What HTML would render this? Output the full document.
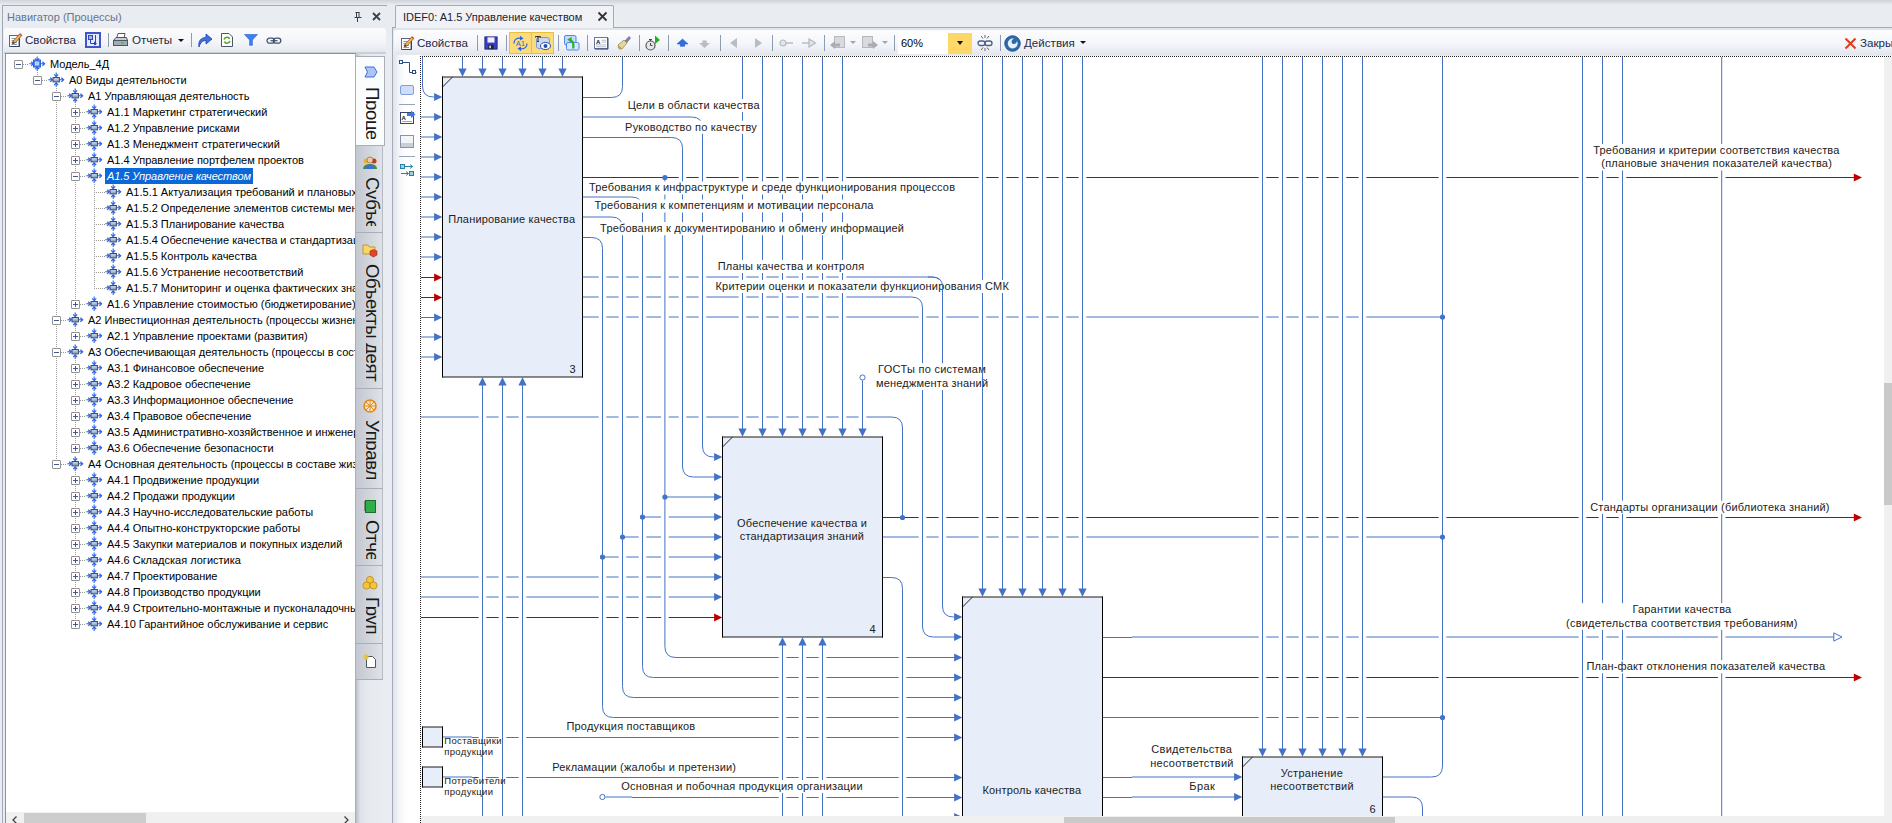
<!DOCTYPE html>
<html><head><meta charset="utf-8"><title>IDEF0</title><style>
html,body{margin:0;padding:0}
body{width:1892px;height:823px;overflow:hidden;position:relative;background:#e9ecf1;font-family:"Liberation Sans",sans-serif;font-size:11px;color:#000}
.a{position:absolute}
.tt{position:absolute;height:16px;line-height:16px;font-size:11px;white-space:nowrap}
.tb{position:absolute;font-size:11.6px;line-height:14px;white-space:nowrap;color:#1e2a4a}
.sep{position:absolute;width:1px;background:#8f9ab3}
svg text{font-family:"Liberation Sans",sans-serif}
</style></head>
<body>
<div class="a" style="left:0;top:0;width:1892px;height:5px;background:linear-gradient(#cfd3da,#e9ecf1)"></div>
<div class="a" style="left:2px;top:5px;width:386px;height:820px;border:1px solid #a3a9b4;border-bottom:none;box-sizing:border-box;background:#e9ecf1"></div>
<div class="a" style="left:7px;top:10px;font-size:11px;line-height:14px;color:#66748f;white-space:nowrap">Навигатор (Процессы)</div>
<svg class="a" style="left:352px;top:10px" width="34" height="14" viewBox="0 0 34 14"><g stroke="#3a3f4a" fill="none"><path d="M3.5 2.5H7.5M4.5 2.5V7.5M7 2.5V7.5M2.5 7.5H9.5M5.5 8V12" stroke-width="1"/><path d="M21 3L28 10M28 3L21 10" stroke-width="1.8"/></g></svg>
<div class="a" style="left:4px;top:28px;width:382px;height:24px;background:linear-gradient(#fcfcfd,#f3f5f8 60%,#e4e8ee);border-radius:3px"></div>
<div class="a" style="left:4px;top:52px;width:382px;height:2px;background:#c9ced7"></div>
<svg class="a" style="left:8px;top:32px" width="16" height="16" viewBox="0 0 16 16"><rect x="1.5" y="3.5" width="9.5" height="11" fill="#fdfdfd" stroke="#5b6784"/><path d="M11.5 5V14.5H2.5" stroke="#39435c" fill="none"/><path d="M3.5 6.5H7M3.5 8.5H6M3.5 10.5H9M3.5 12.5H9" stroke="#8d98b3"/><path d="M5 9.2L11.8 1.8L13.8 3.6L7 11L4.3 11.8Z" fill="#f0b24a" stroke="#7a4a20" stroke-width=".7"/><path d="M11.3 2.4L13.2 4.1L14.2 3L12.3 1.3Z" fill="#d0503a"/><path d="M4.3 11.8L5 9.2L7 11Z" fill="#3a3a3a"/></svg>
<div class="tb" style="left:25px;top:33px">Свойства</div>
<div class="a" style="left:85px;top:32px;width:12px;height:12px;border:2px solid #3f54c6;background:#e6ebfc"></div>
<svg class="a" style="left:86px;top:33px" width="14" height="14" viewBox="0 0 14 14"><rect x="2.5" y="2.5" width="4" height="4" fill="#9db4ee" stroke="#2a48b8"/><path d="M4.5 6.5V10.5H8M9.5 2V12" stroke="#2a48b8" fill="none"/><path d="M8 8.5L11 10.5L8 12.5Z" fill="#2a48b8"/></svg>
<div class="sep" style="left:108px;top:33px;height:14px"></div>
<svg class="a" style="left:112px;top:32px" width="17" height="16" viewBox="0 0 17 16"><path d="M4.5 6.5L6 1.5H13L12 6.5" fill="#fff" stroke="#555"/><path d="M1.5 8.5L4 5.5H14.5L15.5 8.5V13.5H1.5Z" fill="#c9ccd3" stroke="#4d5566"/><rect x="1.5" y="8.5" width="14" height="5" fill="#a4a9b4" stroke="#4d5566"/><rect x="9" y="10" width="3" height="2" fill="#3bd23b"/></svg>
<div class="tb" style="left:132px;top:33px">Отчеты</div>
<div class="a" style="left:178px;top:39px;border:3px solid transparent;border-top:3px solid #111;width:0;height:0"></div>
<div class="sep" style="left:191px;top:33px;height:14px"></div>
<svg class="a" style="left:197px;top:32px" width="16" height="16" viewBox="0 0 16 16"><path d="M2 15C1 9 4 5.5 9 5.5V2L15 7L9 12V8.5C5.5 8.5 3.5 10.5 2 15Z" fill="#3f6fe0" stroke="#1d3fa8" stroke-width=".8"/></svg>
<svg class="a" style="left:220px;top:32px" width="14" height="16" viewBox="0 0 14 16"><path d="M1.5 1.5H9L12.5 5V14.5H1.5Z" fill="#fff" stroke="#4d5566"/><path d="M4 7.5C5 4.5 9 4.5 9.5 7M10 9C9 12 5 12 4.5 9.5" stroke="#4ea524" stroke-width="1.6" fill="none"/></svg>
<svg class="a" style="left:244px;top:34px" width="14" height="12" viewBox="0 0 14 12"><path d="M0.5 0.5H13.5L8.4 6V11.3H5.6V6Z" fill="#3f7ff0" stroke="#2a5fd0" stroke-width=".6"/></svg>
<svg class="a" style="left:266px;top:37px" width="16" height="8" viewBox="0 0 16 8"><rect x="1" y="1.2" width="7.4" height="5" rx="2.5" fill="none" stroke="#46536f" stroke-width="1.3"/><rect x="7.4" y="1.2" width="7.4" height="5" rx="2.5" fill="none" stroke="#46536f" stroke-width="1.3"/><path d="M4.5 3.7H11.5" stroke="#46536f" stroke-width="1.2"/></svg>
<div class="a" style="left:5px;top:53px;width:351px;height:771px;background:#fff;border:1px solid #8a9099;border-right:1px solid #a9aeb7;box-sizing:border-box;overflow:hidden"></div>
<div class="a" style="left:6px;top:54px;width:349px;height:758px;overflow:hidden"><div class="a" style="left:-6px;top:-54px;width:400px;height:823px">
<div style="position:absolute;left:37px;top:72px;width:1px;height:8px;background:repeating-linear-gradient(to bottom,#9a9a9a 0 1px,transparent 1px 2px)"></div>
<div style="position:absolute;left:56px;top:88px;width:1px;height:376px;background:repeating-linear-gradient(to bottom,#9a9a9a 0 1px,transparent 1px 2px)"></div>
<div style="position:absolute;left:75px;top:104px;width:1px;height:200px;background:repeating-linear-gradient(to bottom,#9a9a9a 0 1px,transparent 1px 2px)"></div>
<div style="position:absolute;left:94px;top:184px;width:1px;height:104px;background:repeating-linear-gradient(to bottom,#9a9a9a 0 1px,transparent 1px 2px)"></div>
<div style="position:absolute;left:75px;top:328px;width:1px;height:8px;background:repeating-linear-gradient(to bottom,#9a9a9a 0 1px,transparent 1px 2px)"></div>
<div style="position:absolute;left:75px;top:360px;width:1px;height:88px;background:repeating-linear-gradient(to bottom,#9a9a9a 0 1px,transparent 1px 2px)"></div>
<div style="position:absolute;left:75px;top:472px;width:1px;height:152px;background:repeating-linear-gradient(to bottom,#9a9a9a 0 1px,transparent 1px 2px)"></div>
<div style="position:absolute;left:23px;top:64px;height:1px;width:6px;background:repeating-linear-gradient(to right,#9a9a9a 0 1px,transparent 1px 2px)"></div>
<div style="position:absolute;left:14px;top:60px;width:7px;height:7px;border:1px solid #919191;background:#fff;border-radius:1px"></div><div style="position:absolute;left:16px;top:64px;width:5px;height:1px;background:#44598f"></div>
<svg style="position:absolute;left:29px;top:56px" width="17" height="16" viewBox="0 0 17 16"><g stroke="#2b62e0" stroke-width="1.1" fill="none"><path d="M0.3 7.7H4M12 7.7H15.5M8.2 0.5V4.5M8.2 15V11"/><path d="M2.2 5.7L4.4 7.7L2.2 9.7M13.4 5.7L15.6 7.7L13.4 9.7M6.2 2.4L8.2 4.6L10.2 2.4M6.2 13.2L8.2 11L10.2 13.2" stroke-width="1.2"/></g><rect x="4.5" y="4" width="7" height="7" fill="#4f86ee" stroke="#2b62e0" stroke-width="1"/><rect x="6.5" y="6" width="3" height="3" fill="#a9c6fb" stroke="#dbe8ff" stroke-width=".7"/></svg>
<div class="tt" style="left:50px;top:56px">Модель_4Д</div>
<div style="position:absolute;left:42px;top:80px;height:1px;width:6px;background:repeating-linear-gradient(to right,#9a9a9a 0 1px,transparent 1px 2px)"></div>
<div style="position:absolute;left:33px;top:76px;width:7px;height:7px;border:1px solid #919191;background:#fff;border-radius:1px"></div><div style="position:absolute;left:35px;top:80px;width:5px;height:1px;background:#44598f"></div>
<svg style="position:absolute;left:48px;top:72px" width="17" height="16" viewBox="0 0 17 16"><g stroke="#2b62e0" stroke-width="1.1" fill="none"><path d="M0.3 7.7H4M12 7.7H15.5M8.2 0.5V4.5M8.2 15V11"/><path d="M2.2 5.7L4.4 7.7L2.2 9.7M13.4 5.7L15.6 7.7L13.4 9.7M6.2 2.4L8.2 4.6L10.2 2.4M6.2 13.2L8.2 11L10.2 13.2" stroke-width="1.2"/></g><rect x="5" y="5.5" width="6.4" height="4.4" fill="#9aabcb" stroke="#3b4c6e" stroke-width="1"/><rect x="5.8" y="6.2" width="4.8" height="1.4" fill="#c3cfe6"/></svg>
<div class="tt" style="left:69px;top:72px">A0 Виды деятельности</div>
<div style="position:absolute;left:61px;top:96px;height:1px;width:6px;background:repeating-linear-gradient(to right,#9a9a9a 0 1px,transparent 1px 2px)"></div>
<div style="position:absolute;left:52px;top:92px;width:7px;height:7px;border:1px solid #919191;background:#fff;border-radius:1px"></div><div style="position:absolute;left:54px;top:96px;width:5px;height:1px;background:#44598f"></div>
<svg style="position:absolute;left:67px;top:88px" width="17" height="16" viewBox="0 0 17 16"><g stroke="#2b62e0" stroke-width="1.1" fill="none"><path d="M0.3 7.7H4M12 7.7H15.5M8.2 0.5V4.5M8.2 15V11"/><path d="M2.2 5.7L4.4 7.7L2.2 9.7M13.4 5.7L15.6 7.7L13.4 9.7M6.2 2.4L8.2 4.6L10.2 2.4M6.2 13.2L8.2 11L10.2 13.2" stroke-width="1.2"/></g><rect x="5" y="5.5" width="6.4" height="4.4" fill="#9aabcb" stroke="#3b4c6e" stroke-width="1"/><rect x="5.8" y="6.2" width="4.8" height="1.4" fill="#c3cfe6"/></svg>
<div class="tt" style="left:88px;top:88px">A1 Управляющая деятельность</div>
<div style="position:absolute;left:80px;top:112px;height:1px;width:6px;background:repeating-linear-gradient(to right,#9a9a9a 0 1px,transparent 1px 2px)"></div>
<div style="position:absolute;left:71px;top:108px;width:7px;height:7px;border:1px solid #919191;background:#fff;border-radius:1px"></div><div style="position:absolute;left:73px;top:112px;width:5px;height:1px;background:#44598f"></div><div style="position:absolute;left:75px;top:110px;width:1px;height:5px;background:#44598f"></div>
<svg style="position:absolute;left:86px;top:104px" width="17" height="16" viewBox="0 0 17 16"><g stroke="#2b62e0" stroke-width="1.1" fill="none"><path d="M0.3 7.7H4M12 7.7H15.5M8.2 0.5V4.5M8.2 15V11"/><path d="M2.2 5.7L4.4 7.7L2.2 9.7M13.4 5.7L15.6 7.7L13.4 9.7M6.2 2.4L8.2 4.6L10.2 2.4M6.2 13.2L8.2 11L10.2 13.2" stroke-width="1.2"/></g><rect x="5" y="5.5" width="6.4" height="4.4" fill="#9aabcb" stroke="#3b4c6e" stroke-width="1"/><rect x="5.8" y="6.2" width="4.8" height="1.4" fill="#c3cfe6"/></svg>
<div class="tt" style="left:107px;top:104px">A1.1 Маркетинг стратегический</div>
<div style="position:absolute;left:80px;top:128px;height:1px;width:6px;background:repeating-linear-gradient(to right,#9a9a9a 0 1px,transparent 1px 2px)"></div>
<div style="position:absolute;left:71px;top:124px;width:7px;height:7px;border:1px solid #919191;background:#fff;border-radius:1px"></div><div style="position:absolute;left:73px;top:128px;width:5px;height:1px;background:#44598f"></div><div style="position:absolute;left:75px;top:126px;width:1px;height:5px;background:#44598f"></div>
<svg style="position:absolute;left:86px;top:120px" width="17" height="16" viewBox="0 0 17 16"><g stroke="#2b62e0" stroke-width="1.1" fill="none"><path d="M0.3 7.7H4M12 7.7H15.5M8.2 0.5V4.5M8.2 15V11"/><path d="M2.2 5.7L4.4 7.7L2.2 9.7M13.4 5.7L15.6 7.7L13.4 9.7M6.2 2.4L8.2 4.6L10.2 2.4M6.2 13.2L8.2 11L10.2 13.2" stroke-width="1.2"/></g><rect x="5" y="5.5" width="6.4" height="4.4" fill="#9aabcb" stroke="#3b4c6e" stroke-width="1"/><rect x="5.8" y="6.2" width="4.8" height="1.4" fill="#c3cfe6"/></svg>
<div class="tt" style="left:107px;top:120px">A1.2 Управление рисками</div>
<div style="position:absolute;left:80px;top:144px;height:1px;width:6px;background:repeating-linear-gradient(to right,#9a9a9a 0 1px,transparent 1px 2px)"></div>
<div style="position:absolute;left:71px;top:140px;width:7px;height:7px;border:1px solid #919191;background:#fff;border-radius:1px"></div><div style="position:absolute;left:73px;top:144px;width:5px;height:1px;background:#44598f"></div><div style="position:absolute;left:75px;top:142px;width:1px;height:5px;background:#44598f"></div>
<svg style="position:absolute;left:86px;top:136px" width="17" height="16" viewBox="0 0 17 16"><g stroke="#2b62e0" stroke-width="1.1" fill="none"><path d="M0.3 7.7H4M12 7.7H15.5M8.2 0.5V4.5M8.2 15V11"/><path d="M2.2 5.7L4.4 7.7L2.2 9.7M13.4 5.7L15.6 7.7L13.4 9.7M6.2 2.4L8.2 4.6L10.2 2.4M6.2 13.2L8.2 11L10.2 13.2" stroke-width="1.2"/></g><rect x="5" y="5.5" width="6.4" height="4.4" fill="#9aabcb" stroke="#3b4c6e" stroke-width="1"/><rect x="5.8" y="6.2" width="4.8" height="1.4" fill="#c3cfe6"/></svg>
<div class="tt" style="left:107px;top:136px">A1.3 Менеджмент стратегический</div>
<div style="position:absolute;left:80px;top:160px;height:1px;width:6px;background:repeating-linear-gradient(to right,#9a9a9a 0 1px,transparent 1px 2px)"></div>
<div style="position:absolute;left:71px;top:156px;width:7px;height:7px;border:1px solid #919191;background:#fff;border-radius:1px"></div><div style="position:absolute;left:73px;top:160px;width:5px;height:1px;background:#44598f"></div><div style="position:absolute;left:75px;top:158px;width:1px;height:5px;background:#44598f"></div>
<svg style="position:absolute;left:86px;top:152px" width="17" height="16" viewBox="0 0 17 16"><g stroke="#2b62e0" stroke-width="1.1" fill="none"><path d="M0.3 7.7H4M12 7.7H15.5M8.2 0.5V4.5M8.2 15V11"/><path d="M2.2 5.7L4.4 7.7L2.2 9.7M13.4 5.7L15.6 7.7L13.4 9.7M6.2 2.4L8.2 4.6L10.2 2.4M6.2 13.2L8.2 11L10.2 13.2" stroke-width="1.2"/></g><rect x="5" y="5.5" width="6.4" height="4.4" fill="#9aabcb" stroke="#3b4c6e" stroke-width="1"/><rect x="5.8" y="6.2" width="4.8" height="1.4" fill="#c3cfe6"/></svg>
<div class="tt" style="left:107px;top:152px">A1.4 Управление портфелем проектов</div>
<div style="position:absolute;left:80px;top:176px;height:1px;width:6px;background:repeating-linear-gradient(to right,#9a9a9a 0 1px,transparent 1px 2px)"></div>
<div style="position:absolute;left:71px;top:172px;width:7px;height:7px;border:1px solid #919191;background:#fff;border-radius:1px"></div><div style="position:absolute;left:73px;top:176px;width:5px;height:1px;background:#44598f"></div>
<svg style="position:absolute;left:86px;top:168px" width="17" height="16" viewBox="0 0 17 16"><g stroke="#2b62e0" stroke-width="1.1" fill="none"><path d="M0.3 7.7H4M12 7.7H15.5M8.2 0.5V4.5M8.2 15V11"/><path d="M2.2 5.7L4.4 7.7L2.2 9.7M13.4 5.7L15.6 7.7L13.4 9.7M6.2 2.4L8.2 4.6L10.2 2.4M6.2 13.2L8.2 11L10.2 13.2" stroke-width="1.2"/></g><rect x="5" y="5.5" width="6.4" height="4.4" fill="#9aabcb" stroke="#3b4c6e" stroke-width="1"/><rect x="5.8" y="6.2" width="4.8" height="1.4" fill="#c3cfe6"/></svg>
<div style="position:absolute;left:105px;top:168px;height:16px;width:148px;background:#0a68d8"></div>
<div class="tt" style="left:107px;top:168px;color:#fff;font-style:italic;letter-spacing:-0.08px">A1.5 Управление качеством</div>
<div style="position:absolute;left:94px;top:192px;height:1px;width:11px;background:repeating-linear-gradient(to right,#9a9a9a 0 1px,transparent 1px 2px)"></div>
<svg style="position:absolute;left:105px;top:184px" width="17" height="16" viewBox="0 0 17 16"><g stroke="#2b62e0" stroke-width="1.1" fill="none"><path d="M0.3 7.7H4M12 7.7H15.5M8.2 0.5V4.5M8.2 15V11"/><path d="M2.2 5.7L4.4 7.7L2.2 9.7M13.4 5.7L15.6 7.7L13.4 9.7M6.2 2.4L8.2 4.6L10.2 2.4M6.2 13.2L8.2 11L10.2 13.2" stroke-width="1.2"/></g><rect x="5" y="5.5" width="6.4" height="4.4" fill="#9aabcb" stroke="#3b4c6e" stroke-width="1"/><rect x="5.8" y="6.2" width="4.8" height="1.4" fill="#c3cfe6"/></svg>
<div class="tt" style="left:126px;top:184px">A1.5.1 Актуализация требований и плановых значений</div>
<div style="position:absolute;left:94px;top:208px;height:1px;width:11px;background:repeating-linear-gradient(to right,#9a9a9a 0 1px,transparent 1px 2px)"></div>
<svg style="position:absolute;left:105px;top:200px" width="17" height="16" viewBox="0 0 17 16"><g stroke="#2b62e0" stroke-width="1.1" fill="none"><path d="M0.3 7.7H4M12 7.7H15.5M8.2 0.5V4.5M8.2 15V11"/><path d="M2.2 5.7L4.4 7.7L2.2 9.7M13.4 5.7L15.6 7.7L13.4 9.7M6.2 2.4L8.2 4.6L10.2 2.4M6.2 13.2L8.2 11L10.2 13.2" stroke-width="1.2"/></g><rect x="5" y="5.5" width="6.4" height="4.4" fill="#9aabcb" stroke="#3b4c6e" stroke-width="1"/><rect x="5.8" y="6.2" width="4.8" height="1.4" fill="#c3cfe6"/></svg>
<div class="tt" style="left:126px;top:200px">A1.5.2 Определение элементов системы менеджмента</div>
<div style="position:absolute;left:94px;top:224px;height:1px;width:11px;background:repeating-linear-gradient(to right,#9a9a9a 0 1px,transparent 1px 2px)"></div>
<svg style="position:absolute;left:105px;top:216px" width="17" height="16" viewBox="0 0 17 16"><g stroke="#2b62e0" stroke-width="1.1" fill="none"><path d="M0.3 7.7H4M12 7.7H15.5M8.2 0.5V4.5M8.2 15V11"/><path d="M2.2 5.7L4.4 7.7L2.2 9.7M13.4 5.7L15.6 7.7L13.4 9.7M6.2 2.4L8.2 4.6L10.2 2.4M6.2 13.2L8.2 11L10.2 13.2" stroke-width="1.2"/></g><rect x="5" y="5.5" width="6.4" height="4.4" fill="#9aabcb" stroke="#3b4c6e" stroke-width="1"/><rect x="5.8" y="6.2" width="4.8" height="1.4" fill="#c3cfe6"/></svg>
<div class="tt" style="left:126px;top:216px">A1.5.3 Планирование качества</div>
<div style="position:absolute;left:94px;top:240px;height:1px;width:11px;background:repeating-linear-gradient(to right,#9a9a9a 0 1px,transparent 1px 2px)"></div>
<svg style="position:absolute;left:105px;top:232px" width="17" height="16" viewBox="0 0 17 16"><g stroke="#2b62e0" stroke-width="1.1" fill="none"><path d="M0.3 7.7H4M12 7.7H15.5M8.2 0.5V4.5M8.2 15V11"/><path d="M2.2 5.7L4.4 7.7L2.2 9.7M13.4 5.7L15.6 7.7L13.4 9.7M6.2 2.4L8.2 4.6L10.2 2.4M6.2 13.2L8.2 11L10.2 13.2" stroke-width="1.2"/></g><rect x="5" y="5.5" width="6.4" height="4.4" fill="#9aabcb" stroke="#3b4c6e" stroke-width="1"/><rect x="5.8" y="6.2" width="4.8" height="1.4" fill="#c3cfe6"/></svg>
<div class="tt" style="left:126px;top:232px">A1.5.4 Обеспечение качества и стандартизация знаний</div>
<div style="position:absolute;left:94px;top:256px;height:1px;width:11px;background:repeating-linear-gradient(to right,#9a9a9a 0 1px,transparent 1px 2px)"></div>
<svg style="position:absolute;left:105px;top:248px" width="17" height="16" viewBox="0 0 17 16"><g stroke="#2b62e0" stroke-width="1.1" fill="none"><path d="M0.3 7.7H4M12 7.7H15.5M8.2 0.5V4.5M8.2 15V11"/><path d="M2.2 5.7L4.4 7.7L2.2 9.7M13.4 5.7L15.6 7.7L13.4 9.7M6.2 2.4L8.2 4.6L10.2 2.4M6.2 13.2L8.2 11L10.2 13.2" stroke-width="1.2"/></g><rect x="5" y="5.5" width="6.4" height="4.4" fill="#9aabcb" stroke="#3b4c6e" stroke-width="1"/><rect x="5.8" y="6.2" width="4.8" height="1.4" fill="#c3cfe6"/></svg>
<div class="tt" style="left:126px;top:248px">A1.5.5 Контроль качества</div>
<div style="position:absolute;left:94px;top:272px;height:1px;width:11px;background:repeating-linear-gradient(to right,#9a9a9a 0 1px,transparent 1px 2px)"></div>
<svg style="position:absolute;left:105px;top:264px" width="17" height="16" viewBox="0 0 17 16"><g stroke="#2b62e0" stroke-width="1.1" fill="none"><path d="M0.3 7.7H4M12 7.7H15.5M8.2 0.5V4.5M8.2 15V11"/><path d="M2.2 5.7L4.4 7.7L2.2 9.7M13.4 5.7L15.6 7.7L13.4 9.7M6.2 2.4L8.2 4.6L10.2 2.4M6.2 13.2L8.2 11L10.2 13.2" stroke-width="1.2"/></g><rect x="5" y="5.5" width="6.4" height="4.4" fill="#9aabcb" stroke="#3b4c6e" stroke-width="1"/><rect x="5.8" y="6.2" width="4.8" height="1.4" fill="#c3cfe6"/></svg>
<div class="tt" style="left:126px;top:264px">A1.5.6 Устранение несоответствий</div>
<div style="position:absolute;left:94px;top:288px;height:1px;width:11px;background:repeating-linear-gradient(to right,#9a9a9a 0 1px,transparent 1px 2px)"></div>
<svg style="position:absolute;left:105px;top:280px" width="17" height="16" viewBox="0 0 17 16"><g stroke="#2b62e0" stroke-width="1.1" fill="none"><path d="M0.3 7.7H4M12 7.7H15.5M8.2 0.5V4.5M8.2 15V11"/><path d="M2.2 5.7L4.4 7.7L2.2 9.7M13.4 5.7L15.6 7.7L13.4 9.7M6.2 2.4L8.2 4.6L10.2 2.4M6.2 13.2L8.2 11L10.2 13.2" stroke-width="1.2"/></g><rect x="5" y="5.5" width="6.4" height="4.4" fill="#9aabcb" stroke="#3b4c6e" stroke-width="1"/><rect x="5.8" y="6.2" width="4.8" height="1.4" fill="#c3cfe6"/></svg>
<div class="tt" style="left:126px;top:280px">A1.5.7 Мониторинг и оценка фактических значений</div>
<div style="position:absolute;left:80px;top:304px;height:1px;width:6px;background:repeating-linear-gradient(to right,#9a9a9a 0 1px,transparent 1px 2px)"></div>
<div style="position:absolute;left:71px;top:300px;width:7px;height:7px;border:1px solid #919191;background:#fff;border-radius:1px"></div><div style="position:absolute;left:73px;top:304px;width:5px;height:1px;background:#44598f"></div><div style="position:absolute;left:75px;top:302px;width:1px;height:5px;background:#44598f"></div>
<svg style="position:absolute;left:86px;top:296px" width="17" height="16" viewBox="0 0 17 16"><g stroke="#2b62e0" stroke-width="1.1" fill="none"><path d="M0.3 7.7H4M12 7.7H15.5M8.2 0.5V4.5M8.2 15V11"/><path d="M2.2 5.7L4.4 7.7L2.2 9.7M13.4 5.7L15.6 7.7L13.4 9.7M6.2 2.4L8.2 4.6L10.2 2.4M6.2 13.2L8.2 11L10.2 13.2" stroke-width="1.2"/></g><rect x="5" y="5.5" width="6.4" height="4.4" fill="#9aabcb" stroke="#3b4c6e" stroke-width="1"/><rect x="5.8" y="6.2" width="4.8" height="1.4" fill="#c3cfe6"/></svg>
<div class="tt" style="left:107px;top:296px">A1.6 Управление стоимостью (бюджетирование)</div>
<div style="position:absolute;left:61px;top:320px;height:1px;width:6px;background:repeating-linear-gradient(to right,#9a9a9a 0 1px,transparent 1px 2px)"></div>
<div style="position:absolute;left:52px;top:316px;width:7px;height:7px;border:1px solid #919191;background:#fff;border-radius:1px"></div><div style="position:absolute;left:54px;top:320px;width:5px;height:1px;background:#44598f"></div>
<svg style="position:absolute;left:67px;top:312px" width="17" height="16" viewBox="0 0 17 16"><g stroke="#2b62e0" stroke-width="1.1" fill="none"><path d="M0.3 7.7H4M12 7.7H15.5M8.2 0.5V4.5M8.2 15V11"/><path d="M2.2 5.7L4.4 7.7L2.2 9.7M13.4 5.7L15.6 7.7L13.4 9.7M6.2 2.4L8.2 4.6L10.2 2.4M6.2 13.2L8.2 11L10.2 13.2" stroke-width="1.2"/></g><rect x="5" y="5.5" width="6.4" height="4.4" fill="#9aabcb" stroke="#3b4c6e" stroke-width="1"/><rect x="5.8" y="6.2" width="4.8" height="1.4" fill="#c3cfe6"/></svg>
<div class="tt" style="left:88px;top:312px">A2 Инвестиционная деятельность (процессы жизненного цикла)</div>
<div style="position:absolute;left:80px;top:336px;height:1px;width:6px;background:repeating-linear-gradient(to right,#9a9a9a 0 1px,transparent 1px 2px)"></div>
<div style="position:absolute;left:71px;top:332px;width:7px;height:7px;border:1px solid #919191;background:#fff;border-radius:1px"></div><div style="position:absolute;left:73px;top:336px;width:5px;height:1px;background:#44598f"></div><div style="position:absolute;left:75px;top:334px;width:1px;height:5px;background:#44598f"></div>
<svg style="position:absolute;left:86px;top:328px" width="17" height="16" viewBox="0 0 17 16"><g stroke="#2b62e0" stroke-width="1.1" fill="none"><path d="M0.3 7.7H4M12 7.7H15.5M8.2 0.5V4.5M8.2 15V11"/><path d="M2.2 5.7L4.4 7.7L2.2 9.7M13.4 5.7L15.6 7.7L13.4 9.7M6.2 2.4L8.2 4.6L10.2 2.4M6.2 13.2L8.2 11L10.2 13.2" stroke-width="1.2"/></g><rect x="5" y="5.5" width="6.4" height="4.4" fill="#9aabcb" stroke="#3b4c6e" stroke-width="1"/><rect x="5.8" y="6.2" width="4.8" height="1.4" fill="#c3cfe6"/></svg>
<div class="tt" style="left:107px;top:328px">A2.1 Управление проектами (развития)</div>
<div style="position:absolute;left:61px;top:352px;height:1px;width:6px;background:repeating-linear-gradient(to right,#9a9a9a 0 1px,transparent 1px 2px)"></div>
<div style="position:absolute;left:52px;top:348px;width:7px;height:7px;border:1px solid #919191;background:#fff;border-radius:1px"></div><div style="position:absolute;left:54px;top:352px;width:5px;height:1px;background:#44598f"></div>
<svg style="position:absolute;left:67px;top:344px" width="17" height="16" viewBox="0 0 17 16"><g stroke="#2b62e0" stroke-width="1.1" fill="none"><path d="M0.3 7.7H4M12 7.7H15.5M8.2 0.5V4.5M8.2 15V11"/><path d="M2.2 5.7L4.4 7.7L2.2 9.7M13.4 5.7L15.6 7.7L13.4 9.7M6.2 2.4L8.2 4.6L10.2 2.4M6.2 13.2L8.2 11L10.2 13.2" stroke-width="1.2"/></g><rect x="5" y="5.5" width="6.4" height="4.4" fill="#9aabcb" stroke="#3b4c6e" stroke-width="1"/><rect x="5.8" y="6.2" width="4.8" height="1.4" fill="#c3cfe6"/></svg>
<div class="tt" style="left:88px;top:344px">A3 Обеспечивающая деятельность (процессы в составе</div>
<div style="position:absolute;left:80px;top:368px;height:1px;width:6px;background:repeating-linear-gradient(to right,#9a9a9a 0 1px,transparent 1px 2px)"></div>
<div style="position:absolute;left:71px;top:364px;width:7px;height:7px;border:1px solid #919191;background:#fff;border-radius:1px"></div><div style="position:absolute;left:73px;top:368px;width:5px;height:1px;background:#44598f"></div><div style="position:absolute;left:75px;top:366px;width:1px;height:5px;background:#44598f"></div>
<svg style="position:absolute;left:86px;top:360px" width="17" height="16" viewBox="0 0 17 16"><g stroke="#2b62e0" stroke-width="1.1" fill="none"><path d="M0.3 7.7H4M12 7.7H15.5M8.2 0.5V4.5M8.2 15V11"/><path d="M2.2 5.7L4.4 7.7L2.2 9.7M13.4 5.7L15.6 7.7L13.4 9.7M6.2 2.4L8.2 4.6L10.2 2.4M6.2 13.2L8.2 11L10.2 13.2" stroke-width="1.2"/></g><rect x="5" y="5.5" width="6.4" height="4.4" fill="#9aabcb" stroke="#3b4c6e" stroke-width="1"/><rect x="5.8" y="6.2" width="4.8" height="1.4" fill="#c3cfe6"/></svg>
<div class="tt" style="left:107px;top:360px">A3.1 Финансовое обеспечение</div>
<div style="position:absolute;left:80px;top:384px;height:1px;width:6px;background:repeating-linear-gradient(to right,#9a9a9a 0 1px,transparent 1px 2px)"></div>
<div style="position:absolute;left:71px;top:380px;width:7px;height:7px;border:1px solid #919191;background:#fff;border-radius:1px"></div><div style="position:absolute;left:73px;top:384px;width:5px;height:1px;background:#44598f"></div><div style="position:absolute;left:75px;top:382px;width:1px;height:5px;background:#44598f"></div>
<svg style="position:absolute;left:86px;top:376px" width="17" height="16" viewBox="0 0 17 16"><g stroke="#2b62e0" stroke-width="1.1" fill="none"><path d="M0.3 7.7H4M12 7.7H15.5M8.2 0.5V4.5M8.2 15V11"/><path d="M2.2 5.7L4.4 7.7L2.2 9.7M13.4 5.7L15.6 7.7L13.4 9.7M6.2 2.4L8.2 4.6L10.2 2.4M6.2 13.2L8.2 11L10.2 13.2" stroke-width="1.2"/></g><rect x="5" y="5.5" width="6.4" height="4.4" fill="#9aabcb" stroke="#3b4c6e" stroke-width="1"/><rect x="5.8" y="6.2" width="4.8" height="1.4" fill="#c3cfe6"/></svg>
<div class="tt" style="left:107px;top:376px">A3.2 Кадровое обеспечение</div>
<div style="position:absolute;left:80px;top:400px;height:1px;width:6px;background:repeating-linear-gradient(to right,#9a9a9a 0 1px,transparent 1px 2px)"></div>
<div style="position:absolute;left:71px;top:396px;width:7px;height:7px;border:1px solid #919191;background:#fff;border-radius:1px"></div><div style="position:absolute;left:73px;top:400px;width:5px;height:1px;background:#44598f"></div><div style="position:absolute;left:75px;top:398px;width:1px;height:5px;background:#44598f"></div>
<svg style="position:absolute;left:86px;top:392px" width="17" height="16" viewBox="0 0 17 16"><g stroke="#2b62e0" stroke-width="1.1" fill="none"><path d="M0.3 7.7H4M12 7.7H15.5M8.2 0.5V4.5M8.2 15V11"/><path d="M2.2 5.7L4.4 7.7L2.2 9.7M13.4 5.7L15.6 7.7L13.4 9.7M6.2 2.4L8.2 4.6L10.2 2.4M6.2 13.2L8.2 11L10.2 13.2" stroke-width="1.2"/></g><rect x="5" y="5.5" width="6.4" height="4.4" fill="#9aabcb" stroke="#3b4c6e" stroke-width="1"/><rect x="5.8" y="6.2" width="4.8" height="1.4" fill="#c3cfe6"/></svg>
<div class="tt" style="left:107px;top:392px">A3.3 Информационное обеспечение</div>
<div style="position:absolute;left:80px;top:416px;height:1px;width:6px;background:repeating-linear-gradient(to right,#9a9a9a 0 1px,transparent 1px 2px)"></div>
<div style="position:absolute;left:71px;top:412px;width:7px;height:7px;border:1px solid #919191;background:#fff;border-radius:1px"></div><div style="position:absolute;left:73px;top:416px;width:5px;height:1px;background:#44598f"></div><div style="position:absolute;left:75px;top:414px;width:1px;height:5px;background:#44598f"></div>
<svg style="position:absolute;left:86px;top:408px" width="17" height="16" viewBox="0 0 17 16"><g stroke="#2b62e0" stroke-width="1.1" fill="none"><path d="M0.3 7.7H4M12 7.7H15.5M8.2 0.5V4.5M8.2 15V11"/><path d="M2.2 5.7L4.4 7.7L2.2 9.7M13.4 5.7L15.6 7.7L13.4 9.7M6.2 2.4L8.2 4.6L10.2 2.4M6.2 13.2L8.2 11L10.2 13.2" stroke-width="1.2"/></g><rect x="5" y="5.5" width="6.4" height="4.4" fill="#9aabcb" stroke="#3b4c6e" stroke-width="1"/><rect x="5.8" y="6.2" width="4.8" height="1.4" fill="#c3cfe6"/></svg>
<div class="tt" style="left:107px;top:408px">A3.4 Правовое обеспечение</div>
<div style="position:absolute;left:80px;top:432px;height:1px;width:6px;background:repeating-linear-gradient(to right,#9a9a9a 0 1px,transparent 1px 2px)"></div>
<div style="position:absolute;left:71px;top:428px;width:7px;height:7px;border:1px solid #919191;background:#fff;border-radius:1px"></div><div style="position:absolute;left:73px;top:432px;width:5px;height:1px;background:#44598f"></div><div style="position:absolute;left:75px;top:430px;width:1px;height:5px;background:#44598f"></div>
<svg style="position:absolute;left:86px;top:424px" width="17" height="16" viewBox="0 0 17 16"><g stroke="#2b62e0" stroke-width="1.1" fill="none"><path d="M0.3 7.7H4M12 7.7H15.5M8.2 0.5V4.5M8.2 15V11"/><path d="M2.2 5.7L4.4 7.7L2.2 9.7M13.4 5.7L15.6 7.7L13.4 9.7M6.2 2.4L8.2 4.6L10.2 2.4M6.2 13.2L8.2 11L10.2 13.2" stroke-width="1.2"/></g><rect x="5" y="5.5" width="6.4" height="4.4" fill="#9aabcb" stroke="#3b4c6e" stroke-width="1"/><rect x="5.8" y="6.2" width="4.8" height="1.4" fill="#c3cfe6"/></svg>
<div class="tt" style="left:107px;top:424px">A3.5 Административно-хозяйственное и инженерное</div>
<div style="position:absolute;left:80px;top:448px;height:1px;width:6px;background:repeating-linear-gradient(to right,#9a9a9a 0 1px,transparent 1px 2px)"></div>
<div style="position:absolute;left:71px;top:444px;width:7px;height:7px;border:1px solid #919191;background:#fff;border-radius:1px"></div><div style="position:absolute;left:73px;top:448px;width:5px;height:1px;background:#44598f"></div><div style="position:absolute;left:75px;top:446px;width:1px;height:5px;background:#44598f"></div>
<svg style="position:absolute;left:86px;top:440px" width="17" height="16" viewBox="0 0 17 16"><g stroke="#2b62e0" stroke-width="1.1" fill="none"><path d="M0.3 7.7H4M12 7.7H15.5M8.2 0.5V4.5M8.2 15V11"/><path d="M2.2 5.7L4.4 7.7L2.2 9.7M13.4 5.7L15.6 7.7L13.4 9.7M6.2 2.4L8.2 4.6L10.2 2.4M6.2 13.2L8.2 11L10.2 13.2" stroke-width="1.2"/></g><rect x="5" y="5.5" width="6.4" height="4.4" fill="#9aabcb" stroke="#3b4c6e" stroke-width="1"/><rect x="5.8" y="6.2" width="4.8" height="1.4" fill="#c3cfe6"/></svg>
<div class="tt" style="left:107px;top:440px">A3.6 Обеспечение безопасности</div>
<div style="position:absolute;left:61px;top:464px;height:1px;width:6px;background:repeating-linear-gradient(to right,#9a9a9a 0 1px,transparent 1px 2px)"></div>
<div style="position:absolute;left:52px;top:460px;width:7px;height:7px;border:1px solid #919191;background:#fff;border-radius:1px"></div><div style="position:absolute;left:54px;top:464px;width:5px;height:1px;background:#44598f"></div>
<svg style="position:absolute;left:67px;top:456px" width="17" height="16" viewBox="0 0 17 16"><g stroke="#2b62e0" stroke-width="1.1" fill="none"><path d="M0.3 7.7H4M12 7.7H15.5M8.2 0.5V4.5M8.2 15V11"/><path d="M2.2 5.7L4.4 7.7L2.2 9.7M13.4 5.7L15.6 7.7L13.4 9.7M6.2 2.4L8.2 4.6L10.2 2.4M6.2 13.2L8.2 11L10.2 13.2" stroke-width="1.2"/></g><rect x="5" y="5.5" width="6.4" height="4.4" fill="#9aabcb" stroke="#3b4c6e" stroke-width="1"/><rect x="5.8" y="6.2" width="4.8" height="1.4" fill="#c3cfe6"/></svg>
<div class="tt" style="left:88px;top:456px">A4 Основная деятельность (процессы в составе жизненного</div>
<div style="position:absolute;left:80px;top:480px;height:1px;width:6px;background:repeating-linear-gradient(to right,#9a9a9a 0 1px,transparent 1px 2px)"></div>
<div style="position:absolute;left:71px;top:476px;width:7px;height:7px;border:1px solid #919191;background:#fff;border-radius:1px"></div><div style="position:absolute;left:73px;top:480px;width:5px;height:1px;background:#44598f"></div><div style="position:absolute;left:75px;top:478px;width:1px;height:5px;background:#44598f"></div>
<svg style="position:absolute;left:86px;top:472px" width="17" height="16" viewBox="0 0 17 16"><g stroke="#2b62e0" stroke-width="1.1" fill="none"><path d="M0.3 7.7H4M12 7.7H15.5M8.2 0.5V4.5M8.2 15V11"/><path d="M2.2 5.7L4.4 7.7L2.2 9.7M13.4 5.7L15.6 7.7L13.4 9.7M6.2 2.4L8.2 4.6L10.2 2.4M6.2 13.2L8.2 11L10.2 13.2" stroke-width="1.2"/></g><rect x="5" y="5.5" width="6.4" height="4.4" fill="#9aabcb" stroke="#3b4c6e" stroke-width="1"/><rect x="5.8" y="6.2" width="4.8" height="1.4" fill="#c3cfe6"/></svg>
<div class="tt" style="left:107px;top:472px">A4.1 Продвижение продукции</div>
<div style="position:absolute;left:80px;top:496px;height:1px;width:6px;background:repeating-linear-gradient(to right,#9a9a9a 0 1px,transparent 1px 2px)"></div>
<div style="position:absolute;left:71px;top:492px;width:7px;height:7px;border:1px solid #919191;background:#fff;border-radius:1px"></div><div style="position:absolute;left:73px;top:496px;width:5px;height:1px;background:#44598f"></div><div style="position:absolute;left:75px;top:494px;width:1px;height:5px;background:#44598f"></div>
<svg style="position:absolute;left:86px;top:488px" width="17" height="16" viewBox="0 0 17 16"><g stroke="#2b62e0" stroke-width="1.1" fill="none"><path d="M0.3 7.7H4M12 7.7H15.5M8.2 0.5V4.5M8.2 15V11"/><path d="M2.2 5.7L4.4 7.7L2.2 9.7M13.4 5.7L15.6 7.7L13.4 9.7M6.2 2.4L8.2 4.6L10.2 2.4M6.2 13.2L8.2 11L10.2 13.2" stroke-width="1.2"/></g><rect x="5" y="5.5" width="6.4" height="4.4" fill="#9aabcb" stroke="#3b4c6e" stroke-width="1"/><rect x="5.8" y="6.2" width="4.8" height="1.4" fill="#c3cfe6"/></svg>
<div class="tt" style="left:107px;top:488px">A4.2 Продажи продукции</div>
<div style="position:absolute;left:80px;top:512px;height:1px;width:6px;background:repeating-linear-gradient(to right,#9a9a9a 0 1px,transparent 1px 2px)"></div>
<div style="position:absolute;left:71px;top:508px;width:7px;height:7px;border:1px solid #919191;background:#fff;border-radius:1px"></div><div style="position:absolute;left:73px;top:512px;width:5px;height:1px;background:#44598f"></div><div style="position:absolute;left:75px;top:510px;width:1px;height:5px;background:#44598f"></div>
<svg style="position:absolute;left:86px;top:504px" width="17" height="16" viewBox="0 0 17 16"><g stroke="#2b62e0" stroke-width="1.1" fill="none"><path d="M0.3 7.7H4M12 7.7H15.5M8.2 0.5V4.5M8.2 15V11"/><path d="M2.2 5.7L4.4 7.7L2.2 9.7M13.4 5.7L15.6 7.7L13.4 9.7M6.2 2.4L8.2 4.6L10.2 2.4M6.2 13.2L8.2 11L10.2 13.2" stroke-width="1.2"/></g><rect x="5" y="5.5" width="6.4" height="4.4" fill="#9aabcb" stroke="#3b4c6e" stroke-width="1"/><rect x="5.8" y="6.2" width="4.8" height="1.4" fill="#c3cfe6"/></svg>
<div class="tt" style="left:107px;top:504px">A4.3 Научно-исследовательские работы</div>
<div style="position:absolute;left:80px;top:528px;height:1px;width:6px;background:repeating-linear-gradient(to right,#9a9a9a 0 1px,transparent 1px 2px)"></div>
<div style="position:absolute;left:71px;top:524px;width:7px;height:7px;border:1px solid #919191;background:#fff;border-radius:1px"></div><div style="position:absolute;left:73px;top:528px;width:5px;height:1px;background:#44598f"></div><div style="position:absolute;left:75px;top:526px;width:1px;height:5px;background:#44598f"></div>
<svg style="position:absolute;left:86px;top:520px" width="17" height="16" viewBox="0 0 17 16"><g stroke="#2b62e0" stroke-width="1.1" fill="none"><path d="M0.3 7.7H4M12 7.7H15.5M8.2 0.5V4.5M8.2 15V11"/><path d="M2.2 5.7L4.4 7.7L2.2 9.7M13.4 5.7L15.6 7.7L13.4 9.7M6.2 2.4L8.2 4.6L10.2 2.4M6.2 13.2L8.2 11L10.2 13.2" stroke-width="1.2"/></g><rect x="5" y="5.5" width="6.4" height="4.4" fill="#9aabcb" stroke="#3b4c6e" stroke-width="1"/><rect x="5.8" y="6.2" width="4.8" height="1.4" fill="#c3cfe6"/></svg>
<div class="tt" style="left:107px;top:520px">A4.4 Опытно-конструкторские работы</div>
<div style="position:absolute;left:80px;top:544px;height:1px;width:6px;background:repeating-linear-gradient(to right,#9a9a9a 0 1px,transparent 1px 2px)"></div>
<div style="position:absolute;left:71px;top:540px;width:7px;height:7px;border:1px solid #919191;background:#fff;border-radius:1px"></div><div style="position:absolute;left:73px;top:544px;width:5px;height:1px;background:#44598f"></div><div style="position:absolute;left:75px;top:542px;width:1px;height:5px;background:#44598f"></div>
<svg style="position:absolute;left:86px;top:536px" width="17" height="16" viewBox="0 0 17 16"><g stroke="#2b62e0" stroke-width="1.1" fill="none"><path d="M0.3 7.7H4M12 7.7H15.5M8.2 0.5V4.5M8.2 15V11"/><path d="M2.2 5.7L4.4 7.7L2.2 9.7M13.4 5.7L15.6 7.7L13.4 9.7M6.2 2.4L8.2 4.6L10.2 2.4M6.2 13.2L8.2 11L10.2 13.2" stroke-width="1.2"/></g><rect x="5" y="5.5" width="6.4" height="4.4" fill="#9aabcb" stroke="#3b4c6e" stroke-width="1"/><rect x="5.8" y="6.2" width="4.8" height="1.4" fill="#c3cfe6"/></svg>
<div class="tt" style="left:107px;top:536px">A4.5 Закупки материалов и покупных изделий</div>
<div style="position:absolute;left:80px;top:560px;height:1px;width:6px;background:repeating-linear-gradient(to right,#9a9a9a 0 1px,transparent 1px 2px)"></div>
<div style="position:absolute;left:71px;top:556px;width:7px;height:7px;border:1px solid #919191;background:#fff;border-radius:1px"></div><div style="position:absolute;left:73px;top:560px;width:5px;height:1px;background:#44598f"></div><div style="position:absolute;left:75px;top:558px;width:1px;height:5px;background:#44598f"></div>
<svg style="position:absolute;left:86px;top:552px" width="17" height="16" viewBox="0 0 17 16"><g stroke="#2b62e0" stroke-width="1.1" fill="none"><path d="M0.3 7.7H4M12 7.7H15.5M8.2 0.5V4.5M8.2 15V11"/><path d="M2.2 5.7L4.4 7.7L2.2 9.7M13.4 5.7L15.6 7.7L13.4 9.7M6.2 2.4L8.2 4.6L10.2 2.4M6.2 13.2L8.2 11L10.2 13.2" stroke-width="1.2"/></g><rect x="5" y="5.5" width="6.4" height="4.4" fill="#9aabcb" stroke="#3b4c6e" stroke-width="1"/><rect x="5.8" y="6.2" width="4.8" height="1.4" fill="#c3cfe6"/></svg>
<div class="tt" style="left:107px;top:552px">A4.6 Складская логистика</div>
<div style="position:absolute;left:80px;top:576px;height:1px;width:6px;background:repeating-linear-gradient(to right,#9a9a9a 0 1px,transparent 1px 2px)"></div>
<div style="position:absolute;left:71px;top:572px;width:7px;height:7px;border:1px solid #919191;background:#fff;border-radius:1px"></div><div style="position:absolute;left:73px;top:576px;width:5px;height:1px;background:#44598f"></div><div style="position:absolute;left:75px;top:574px;width:1px;height:5px;background:#44598f"></div>
<svg style="position:absolute;left:86px;top:568px" width="17" height="16" viewBox="0 0 17 16"><g stroke="#2b62e0" stroke-width="1.1" fill="none"><path d="M0.3 7.7H4M12 7.7H15.5M8.2 0.5V4.5M8.2 15V11"/><path d="M2.2 5.7L4.4 7.7L2.2 9.7M13.4 5.7L15.6 7.7L13.4 9.7M6.2 2.4L8.2 4.6L10.2 2.4M6.2 13.2L8.2 11L10.2 13.2" stroke-width="1.2"/></g><rect x="5" y="5.5" width="6.4" height="4.4" fill="#9aabcb" stroke="#3b4c6e" stroke-width="1"/><rect x="5.8" y="6.2" width="4.8" height="1.4" fill="#c3cfe6"/></svg>
<div class="tt" style="left:107px;top:568px">A4.7 Проектирование</div>
<div style="position:absolute;left:80px;top:592px;height:1px;width:6px;background:repeating-linear-gradient(to right,#9a9a9a 0 1px,transparent 1px 2px)"></div>
<div style="position:absolute;left:71px;top:588px;width:7px;height:7px;border:1px solid #919191;background:#fff;border-radius:1px"></div><div style="position:absolute;left:73px;top:592px;width:5px;height:1px;background:#44598f"></div><div style="position:absolute;left:75px;top:590px;width:1px;height:5px;background:#44598f"></div>
<svg style="position:absolute;left:86px;top:584px" width="17" height="16" viewBox="0 0 17 16"><g stroke="#2b62e0" stroke-width="1.1" fill="none"><path d="M0.3 7.7H4M12 7.7H15.5M8.2 0.5V4.5M8.2 15V11"/><path d="M2.2 5.7L4.4 7.7L2.2 9.7M13.4 5.7L15.6 7.7L13.4 9.7M6.2 2.4L8.2 4.6L10.2 2.4M6.2 13.2L8.2 11L10.2 13.2" stroke-width="1.2"/></g><rect x="5" y="5.5" width="6.4" height="4.4" fill="#9aabcb" stroke="#3b4c6e" stroke-width="1"/><rect x="5.8" y="6.2" width="4.8" height="1.4" fill="#c3cfe6"/></svg>
<div class="tt" style="left:107px;top:584px">A4.8 Производство продукции</div>
<div style="position:absolute;left:80px;top:608px;height:1px;width:6px;background:repeating-linear-gradient(to right,#9a9a9a 0 1px,transparent 1px 2px)"></div>
<div style="position:absolute;left:71px;top:604px;width:7px;height:7px;border:1px solid #919191;background:#fff;border-radius:1px"></div><div style="position:absolute;left:73px;top:608px;width:5px;height:1px;background:#44598f"></div><div style="position:absolute;left:75px;top:606px;width:1px;height:5px;background:#44598f"></div>
<svg style="position:absolute;left:86px;top:600px" width="17" height="16" viewBox="0 0 17 16"><g stroke="#2b62e0" stroke-width="1.1" fill="none"><path d="M0.3 7.7H4M12 7.7H15.5M8.2 0.5V4.5M8.2 15V11"/><path d="M2.2 5.7L4.4 7.7L2.2 9.7M13.4 5.7L15.6 7.7L13.4 9.7M6.2 2.4L8.2 4.6L10.2 2.4M6.2 13.2L8.2 11L10.2 13.2" stroke-width="1.2"/></g><rect x="5" y="5.5" width="6.4" height="4.4" fill="#9aabcb" stroke="#3b4c6e" stroke-width="1"/><rect x="5.8" y="6.2" width="4.8" height="1.4" fill="#c3cfe6"/></svg>
<div class="tt" style="left:107px;top:600px">A4.9 Строительно-монтажные и пусконаладочные работы</div>
<div style="position:absolute;left:80px;top:624px;height:1px;width:6px;background:repeating-linear-gradient(to right,#9a9a9a 0 1px,transparent 1px 2px)"></div>
<div style="position:absolute;left:71px;top:620px;width:7px;height:7px;border:1px solid #919191;background:#fff;border-radius:1px"></div><div style="position:absolute;left:73px;top:624px;width:5px;height:1px;background:#44598f"></div><div style="position:absolute;left:75px;top:622px;width:1px;height:5px;background:#44598f"></div>
<svg style="position:absolute;left:86px;top:616px" width="17" height="16" viewBox="0 0 17 16"><g stroke="#2b62e0" stroke-width="1.1" fill="none"><path d="M0.3 7.7H4M12 7.7H15.5M8.2 0.5V4.5M8.2 15V11"/><path d="M2.2 5.7L4.4 7.7L2.2 9.7M13.4 5.7L15.6 7.7L13.4 9.7M6.2 2.4L8.2 4.6L10.2 2.4M6.2 13.2L8.2 11L10.2 13.2" stroke-width="1.2"/></g><rect x="5" y="5.5" width="6.4" height="4.4" fill="#9aabcb" stroke="#3b4c6e" stroke-width="1"/><rect x="5.8" y="6.2" width="4.8" height="1.4" fill="#c3cfe6"/></svg>
<div class="tt" style="left:107px;top:616px">A4.10 Гарантийное обслуживание и сервис</div>
</div></div>
<div class="a" style="left:6px;top:812px;width:349px;height:11px;background:#f0f0f0"></div>
<div class="a" style="left:24px;top:813px;width:122px;height:10px;background:#cdcdcd"></div>
<svg class="a" style="left:10px;top:815px" width="10" height="10" viewBox="0 0 10 10"><path d="M6.5 1.5L3 5L6.5 8.5" stroke="#404040" stroke-width="1.3" fill="none"/></svg>
<svg class="a" style="left:341px;top:815px" width="10" height="10" viewBox="0 0 10 10"><path d="M3.5 1.5L7 5L3.5 8.5" stroke="#404040" stroke-width="1.3" fill="none"/></svg>
<div class="a" style="left:356px;top:54px;width:31px;height:770px;background:linear-gradient(to right,#b9bec7,#dde0e6 4px,#e6e9ee 12px,#e9ecf1)"></div>
<div class="a" style="left:356px;top:56px;width:29px;height:90px;background:#fbfcfd;border:1px solid #a9aeb7;border-left:none;box-sizing:border-box"></div>
<svg class="a" style="left:363px;top:65px" width="16" height="16" viewBox="0 0 16 16"><path d="M2 2H11L14 7L11 12H2L4.5 7Z" fill="#aec4f4" stroke="#3f6fd6"/></svg>
<div class="a" style="left:366px;top:87px;width:17px;height:52px;overflow:hidden"><div style="position:absolute;left:16.3px;top:0;transform-origin:0 0;transform:rotate(90deg);font-size:18.6px;line-height:19px;letter-spacing:-0.35px;white-space:nowrap;color:#1a1a1a">Проце</div></div>
<div class="a" style="left:356px;top:146px;width:27px;height:87px;background:linear-gradient(to right,#c3c7cf,#dfe2e8);border-bottom:1px solid #a9aeb7;border-right:1px solid #b5bac3;box-sizing:border-box"></div>
<svg class="a" style="left:362px;top:155px" width="16" height="16" viewBox="0 0 16 16"><circle cx="4" cy="6" r="2.5" fill="#e8b23a"/><circle cx="12" cy="6" r="2.5" fill="#c0392b"/><circle cx="8" cy="5" r="3" fill="#f0c9a0" stroke="#7a5a3a" stroke-width=".6"/><path d="M1 14C1 10 5 9 8 9S15 10 15 14Z" fill="#3f8f3f"/><path d="M4 14C4 10.5 6 9.5 8 9.5S12 10.5 12 14Z" fill="#3f6fd6"/></svg>
<div class="a" style="left:366px;top:177px;width:17px;height:49px;overflow:hidden"><div style="position:absolute;left:16.3px;top:0;transform-origin:0 0;transform:rotate(90deg);font-size:18.6px;line-height:19px;letter-spacing:-0.35px;white-space:nowrap;color:#1a1a1a">Субъе</div></div>
<div class="a" style="left:356px;top:233px;width:27px;height:156px;background:linear-gradient(to right,#c3c7cf,#dfe2e8);border-bottom:1px solid #a9aeb7;border-right:1px solid #b5bac3;box-sizing:border-box"></div>
<svg class="a" style="left:362px;top:242px" width="16" height="16" viewBox="0 0 16 16"><path d="M1 3H6L7.5 5H13V12H1Z" fill="#f6d56a" stroke="#c79a1e"/><path d="M8 9L11.5 7.5L15 9V13L11.5 15L8 13Z" fill="#e0452b" stroke="#9a2a18" stroke-width=".6"/></svg>
<div class="a" style="left:366px;top:264px;width:17px;height:118px;overflow:hidden"><div style="position:absolute;left:16.3px;top:0;transform-origin:0 0;transform:rotate(90deg);font-size:18.6px;line-height:19px;letter-spacing:-0.35px;white-space:nowrap;color:#1a1a1a">Объекты деят</div></div>
<div class="a" style="left:356px;top:389px;width:27px;height:100px;background:linear-gradient(to right,#c3c7cf,#dfe2e8);border-bottom:1px solid #a9aeb7;border-right:1px solid #b5bac3;box-sizing:border-box"></div>
<svg class="a" style="left:362px;top:398px" width="16" height="16" viewBox="0 0 16 16"><circle cx="8" cy="8" r="6" fill="#fbe9c3" stroke="#e08a1e" stroke-width="1.6"/><path d="M8 2V14M2 8H14M3.8 3.8L12.2 12.2M12.2 3.8L3.8 12.2" stroke="#e08a1e" stroke-width="1"/></svg>
<div class="a" style="left:366px;top:420px;width:17px;height:62px;overflow:hidden"><div style="position:absolute;left:16.3px;top:0;transform-origin:0 0;transform:rotate(90deg);font-size:18.6px;line-height:19px;letter-spacing:-0.35px;white-space:nowrap;color:#1a1a1a">Управл</div></div>
<div class="a" style="left:356px;top:489px;width:27px;height:77px;background:linear-gradient(to right,#c3c7cf,#dfe2e8);border-bottom:1px solid #a9aeb7;border-right:1px solid #b5bac3;box-sizing:border-box"></div>
<svg class="a" style="left:362px;top:498px" width="16" height="16" viewBox="0 0 16 16"><rect x="3.5" y="2.5" width="10" height="12" fill="#2fae4a" stroke="#1c6e2e"/><path d="M2 4H4M2 6H4M2 8H4M2 10H4M2 12H4" stroke="#444"/></svg>
<div class="a" style="left:366px;top:520px;width:17px;height:39px;overflow:hidden"><div style="position:absolute;left:16.3px;top:0;transform-origin:0 0;transform:rotate(90deg);font-size:18.6px;line-height:19px;letter-spacing:-0.35px;white-space:nowrap;color:#1a1a1a">Отче</div></div>
<div class="a" style="left:356px;top:566px;width:27px;height:78px;background:linear-gradient(to right,#c3c7cf,#dfe2e8);border-bottom:1px solid #a9aeb7;border-right:1px solid #b5bac3;box-sizing:border-box"></div>
<svg class="a" style="left:362px;top:575px" width="16" height="16" viewBox="0 0 16 16"><circle cx="8" cy="5" r="3.6" fill="#f2c53a" stroke="#b98a14" stroke-width=".8"/><circle cx="4.5" cy="10.5" r="3.6" fill="#f2c53a" stroke="#b98a14" stroke-width=".8"/><circle cx="11.5" cy="10.5" r="3.6" fill="#f2c53a" stroke="#b98a14" stroke-width=".8"/></svg>
<div class="a" style="left:366px;top:597px;width:17px;height:40px;overflow:hidden"><div style="position:absolute;left:16.3px;top:0;transform-origin:0 0;transform:rotate(90deg);font-size:18.6px;line-height:19px;letter-spacing:-0.35px;white-space:nowrap;color:#1a1a1a">Груп</div></div>
<div class="a" style="left:356px;top:644px;width:27px;height:36px;background:linear-gradient(to right,#c3c7cf,#dfe2e8);border-bottom:1px solid #a9aeb7;border-right:1px solid #b5bac3;box-sizing:border-box"></div>
<svg class="a" style="left:362px;top:653px" width="16" height="16" viewBox="0 0 16 16"><path d="M4.5 3.5H10.5L13.5 6.5V14.5H4.5Z" fill="#fff" stroke="#4d5566"/><path d="M4 1V7M1 4H7M2 2L6 6M6 2L2 6" stroke="#e8c43a" stroke-width="1.2"/></svg>
<div class="a" style="left:387px;top:5px;width:8px;height:820px;background:#e9ecf1"></div>
<div class="a" style="left:392px;top:27px;width:1500px;height:1px;background:#a3aab8"></div>
<div class="a" style="left:393px;top:28px;width:1500px;height:2px;background:#dfe3ea"></div>
<div class="a" style="left:392px;top:27px;width:1px;height:800px;background:#a3aab8"></div>
<div class="a" style="left:395px;top:5px;width:219px;height:23px;background:#f0f2f5;border:1px solid #a3aab8;border-bottom:none;box-sizing:border-box;border-radius:2px 2px 0 0"></div>
<div class="a" style="left:403px;top:10px;font-size:11px;line-height:14px;color:#1b2233;white-space:nowrap">IDEF0: A1.5 Управление качеством</div>
<svg class="a" style="left:597px;top:11px" width="11" height="11" viewBox="0 0 11 11"><path d="M1.5 1.5L9.5 9.5M9.5 1.5L1.5 9.5" stroke="#333" stroke-width="1.8"/></svg>
<div class="a" style="left:394px;top:30px;width:1498px;height:25px;border-radius:3px 0 0 3px;background:linear-gradient(#fdfdfe,#f4f6f9 55%,#e3e7ee)"></div>
<svg class="a" style="left:400px;top:35px" width="16" height="16" viewBox="0 0 16 16"><rect x="1.5" y="3.5" width="9.5" height="11" fill="#fdfdfd" stroke="#5b6784"/><path d="M11.5 5V14.5H2.5" stroke="#39435c" fill="none"/><path d="M3.5 6.5H7M3.5 8.5H6M3.5 10.5H9M3.5 12.5H9" stroke="#8d98b3"/><path d="M5 9.2L11.8 1.8L13.8 3.6L7 11L4.3 11.8Z" fill="#f0b24a" stroke="#7a4a20" stroke-width=".7"/><path d="M11.3 2.4L13.2 4.1L14.2 3L12.3 1.3Z" fill="#d0503a"/><path d="M4.3 11.8L5 9.2L7 11Z" fill="#3a3a3a"/></svg>
<div class="tb" style="left:417px;top:36px">Свойства</div>
<div class="sep" style="left:477px;top:35px;height:16px"></div>
<svg class="a" style="left:484px;top:36px" width="14" height="14" viewBox="0 0 16 16"><rect x="1" y="1" width="14" height="14" fill="#3a3fc0" stroke="#1f2280"/><rect x="4" y="1.5" width="8" height="6" fill="#eef"/><rect x="5" y="10" width="6" height="5" fill="#223"/><rect x="6" y="11" width="2" height="3" fill="#ccd"/></svg>
<div class="sep" style="left:506px;top:35px;height:16px"></div>
<div class="a" style="left:509px;top:32px;width:45px;height:22px;background:#fbdc7b;border:1px solid #e8bf45;box-sizing:border-box"></div>
<div class="a" style="left:531px;top:32px;width:1px;height:22px;background:#e8bf45"></div>
<svg class="a" style="left:512px;top:35px" width="17" height="17" viewBox="0 0 17 17"><path d="M2 8.5C1.8 5 4.5 2.8 8.5 3.2M15 8.5C15.2 12 12.5 14.2 8.5 13.8" stroke="#2f62dc" stroke-width="1.2" fill="none"/><path d="M8 0.8L11.6 3.4L8 5.6ZM9 11.4L5.4 13.6L9 16.2Z" fill="#2f62dc"/><text x="4" y="11" font-size="7" fill="#2f62dc" letter-spacing=".4">A1</text></svg>
<svg class="a" style="left:534px;top:34px" width="18" height="18" viewBox="0 0 18 18"><rect x="2.5" y="3.5" width="13" height="11" rx="2.5" fill="#c9d7f2" stroke="#7f97cc"/><path d="M1.5 2.5H6.5M1.5 2.5V3.6M6.5 2.5V3.6M4 2.5V7.5M3 7.5H5" stroke="#222" stroke-width=".9" fill="none"/><ellipse cx="11.5" cy="12" rx="5" ry="3.6" fill="#fff" stroke="#2a4aa8" stroke-width="1"/><circle cx="11.5" cy="12" r="2" fill="#2a4aa8"/></svg>
<div class="sep" style="left:558px;top:35px;height:16px"></div>
<svg class="a" style="left:563px;top:34px" width="18" height="18" viewBox="0 0 18 18"><rect x="1.5" y="1.5" width="11.5" height="9.5" rx="1.5" fill="#c5d9fa" stroke="#4f86e8"/><rect x="3.5" y="8.5" width="12.5" height="7.5" rx="1.5" fill="#dbe7fc" stroke="#4f86e8"/><path d="M10.3 14.5C10.8 10 10 6.5 6.5 6" stroke="#27b327" stroke-width="2.2" fill="none"/><path d="M4.2 5.6L8.6 3V8.8Z" fill="#27b327"/></svg>
<div class="sep" style="left:587px;top:35px;height:16px"></div>
<svg class="a" style="left:594px;top:37px" width="15" height="13" viewBox="0 0 16 14"><rect x="0.5" y="0.5" width="14" height="12" fill="#fff" stroke="#5f6f9a"/><path d="M15 1V13H1" stroke="#2a3a6a" fill="none"/><text x="2" y="7" font-size="6.5" fill="#111" font-weight="bold">A</text><path d="M8 3.5H13M8 5.5H13M2 8.5H13M2 10.5H13" stroke="#9aa6c0" stroke-width=".8"/></svg>
<svg class="a" style="left:616px;top:35px" width="16" height="16" viewBox="0 0 16 16"><path d="M9 6L13 1.5L14.5 3L10.5 8Z" fill="#8a7fb0" stroke="#5d5288" stroke-width=".6"/><path d="M2 10L8 5L11 8L6 14Z" fill="#e8d79a" stroke="#8f7a3a" stroke-width=".7"/><path d="M2 10L6 14L4 15L1.5 12.5Z" fill="#b8a86a"/></svg>
<div class="sep" style="left:639px;top:35px;height:16px"></div>
<svg class="a" style="left:644px;top:34px" width="18" height="18" viewBox="0 0 18 18"><circle cx="6.5" cy="11.5" r="4.5" fill="#e6e6e6" stroke="#555" stroke-width="1.2"/><path d="M6.5 9V11.5H8.5M5 5.5H8M6.5 5.5V7" stroke="#444" fill="none"/><path d="M11 1.5L16 6L11 10Z" fill="#19b219"/></svg>
<div class="sep" style="left:668px;top:35px;height:16px"></div>
<svg class="a" style="left:676px;top:38px" width="13" height="10" viewBox="0 0 13 10"><path d="M6.5 1L12 6H8.7V8.3H4.3V6H1Z" fill="#2a6fe8" stroke="#1a4fc0" stroke-width=".5"/></svg>
<svg class="a" style="left:698px;top:39px" width="13" height="10" viewBox="0 0 13 10"><path d="M6.5 9L12 4H8.7V1.5H4.3V4H1Z" fill="#b9bcc3"/></svg>
<div class="sep" style="left:720px;top:35px;height:16px"></div>
<svg class="a" style="left:729px;top:37px" width="9" height="12" viewBox="0 0 9 12"><path d="M8 1V11L1 6Z" fill="#b9bcc3"/></svg>
<svg class="a" style="left:754px;top:37px" width="9" height="12" viewBox="0 0 9 12"><path d="M1 1V11L8 6Z" fill="#b9bcc3"/></svg>
<div class="sep" style="left:772px;top:35px;height:16px"></div>
<svg class="a" style="left:779px;top:38px" width="15" height="10" viewBox="0 0 15 10"><circle cx="4" cy="5" r="3" fill="#e4e5e8" stroke="#b5b8bf" stroke-width="1.2"/><path d="M7 5H14" stroke="#b5b8bf" stroke-width="1.4"/></svg>
<svg class="a" style="left:802px;top:38px" width="15" height="10" viewBox="0 0 15 10"><path d="M0 5H7" stroke="#b5b8bf" stroke-width="1.4"/><path d="M7 1L13.5 5L7 9Z" fill="#e4e5e8" stroke="#b5b8bf" stroke-width="1.2"/></svg>
<div class="sep" style="left:824px;top:35px;height:16px"></div>
<svg class="a" style="left:829px;top:34px" width="18" height="18" viewBox="0 0 18 18"><rect x="5.5" y="2.5" width="10" height="11" fill="#d9dadd" stroke="#b5b8bf"/><path d="M1 11L6 7V9.5H11V12.5H6V15Z" fill="#a9acb3"/></svg>
<div class="a" style="left:850px;top:41px;border:3px solid transparent;border-top:3px solid #a3a6ad;width:0;height:0"></div>
<svg class="a" style="left:861px;top:34px" width="18" height="18" viewBox="0 0 18 18"><rect x="1.5" y="2.5" width="10" height="11" fill="#d9dadd" stroke="#b5b8bf"/><path d="M17 11L12 7V9.5H7V12.5H12V15Z" fill="#a9acb3"/></svg>
<div class="a" style="left:882px;top:41px;border:3px solid transparent;border-top:3px solid #a3a6ad;width:0;height:0"></div>
<div class="sep" style="left:894px;top:35px;height:16px"></div>
<div class="a" style="left:898px;top:32px;width:74px;height:22px;background:#fff"></div>
<div class="tb" style="left:901px;top:36px;color:#000;font-size:11px">60%</div>
<div class="a" style="left:948px;top:33px;width:24px;height:21px;background:#fdd868"></div>
<div class="a" style="left:957px;top:41px;border:3.5px solid transparent;border-top:4px solid #111;width:0;height:0"></div>
<svg class="a" style="left:976px;top:34px" width="18" height="18" viewBox="0 0 18 18"><path d="M9 1V4M5 2L7 4.5M13 2L11 4.5M9 17V14M5 16L7 13.5M13 16L11 13.5" stroke="#555" stroke-width=".9"/><rect x="2" y="7" width="7" height="4.5" rx="2.2" fill="none" stroke="#48608f" stroke-width="1.3"/><rect x="9" y="7" width="7" height="4.5" rx="2.2" fill="none" stroke="#48608f" stroke-width="1.3"/></svg>
<div class="sep" style="left:1000px;top:35px;height:16px"></div>
<svg class="a" style="left:1004px;top:35px" width="17" height="17" viewBox="0 0 17 17"><circle cx="8.5" cy="8.5" r="7.8" fill="#2d6aa8" stroke="#1b4a7e" stroke-width=".8"/><path d="M4 10C3 6 6 3 10 3.5C7 5 7 8 9 9C11 9.5 12.5 8 13 6C15 10 12 14 8 13.5C6 13 4.5 12 4 10Z" fill="#e8f0fa"/></svg>
<div class="tb" style="left:1024px;top:36px">Действия</div>
<div class="a" style="left:1080px;top:41px;border:3px solid transparent;border-top:3.5px solid #111;width:0;height:0"></div>
<svg class="a" style="left:1844px;top:37px" width="13" height="13" viewBox="0 0 13 13"><path d="M1.5 1.5L11.5 11.5M11.5 1.5L1.5 11.5" stroke="#e03a1e" stroke-width="2"/></svg>
<div class="tb" style="left:1860px;top:36px">Закрыть</div>
<div class="a" style="left:393px;top:55px;width:28px;height:770px;background:linear-gradient(to right,#dfe2e8,#f3f5f8 6px,#fdfdfe 12px,#fff 18px)"></div>
<svg class="a" style="left:396px;top:55px" width="25" height="130" viewBox="396 55 25 130"><path d="M402.5 62.5H409.5V72.5H416.5" stroke="#2a4b8f" fill="none"/><rect x="399.5" y="60.5" width="3" height="3" fill="#fff" stroke="#2a4b8f"/><rect x="412.5" y="70.5" width="3" height="3" fill="#fff" stroke="#2a4b8f"/><rect x="400.5" y="85.5" width="13" height="9" rx="1.5" fill="#cfddf8" stroke="#7f9fe0"/><path d="M399 104.5H415" stroke="#9aa3b5"/><rect x="400.5" y="112.5" width="13" height="11" fill="#fff" stroke="#38456a"/><text x="401.5" y="120" font-size="6" font-weight="bold" fill="#111">A</text><path d="M402 121.5H412" stroke="#9aa6c0"/><path d="M407 113L411 113L411 110.5L415.5 114.5L411 118V116H407Z" fill="#3f77e4"/><rect x="400.5" y="135.5" width="13" height="12" fill="#f3f4f7" stroke="#8a93a8"/><rect x="401" y="143" width="12" height="4" fill="#c9ceda"/><path d="M399 156.5H415" stroke="#9aa3b5"/><rect x="400.5" y="164.5" width="4" height="4" fill="#9ad0e8" stroke="#2a7fa8"/><path d="M405 166.5H412M410 164.5L412.5 166.5L410 168.5" stroke="#2a7fa8" fill="none"/><rect x="409.5" y="171.5" width="4" height="4" fill="#9ad0e8" stroke="#2a7fa8"/><path d="M401 173.5H408M406 171.5L408.5 173.5L406 175.5" stroke="#2a7fa8" fill="none"/></svg>
<div class="a" style="left:421px;top:57px;width:1463px;height:759px;background:#fff;overflow:hidden">
<svg class="a" style="left:-421px;top:-57px" width="1892" height="823" viewBox="0 0 1892 823">
<path d="M462.50 50.00V70.80" stroke="#4472c4" stroke-width="1.0" fill="none"/>
<polygon points="462.50,76.80 458.40,68.60 466.60,68.60" fill="#4472c4"/>
<path d="M482.50 50.00V70.80" stroke="#4472c4" stroke-width="1.0" fill="none"/>
<polygon points="482.50,76.80 478.40,68.60 486.60,68.60" fill="#4472c4"/>
<path d="M502.50 50.00V70.80" stroke="#4472c4" stroke-width="1.0" fill="none"/>
<polygon points="502.50,76.80 498.40,68.60 506.60,68.60" fill="#4472c4"/>
<path d="M522.50 50.00V70.80" stroke="#4472c4" stroke-width="1.0" fill="none"/>
<polygon points="522.50,76.80 518.40,68.60 526.60,68.60" fill="#4472c4"/>
<path d="M542.50 50.00V70.80" stroke="#4472c4" stroke-width="1.0" fill="none"/>
<polygon points="542.50,76.80 538.40,68.60 546.60,68.60" fill="#4472c4"/>
<path d="M562.50 50.00V70.80" stroke="#4472c4" stroke-width="1.0" fill="none"/>
<polygon points="562.50,76.80 558.40,68.60 566.60,68.60" fill="#4472c4"/>
<path d="M422.50 50.00V86.00M422.50 86.00Q422.50 97.00 433.50 97.00M433.50 97.00H436.30" stroke="#4472c4" stroke-width="1.0" fill="none"/>
<polygon points="442.30,97.00 434.10,92.90 434.10,101.10" fill="#4472c4"/>
<path d="M421.00 117.00H436.30" stroke="#4472c4" stroke-width="1.0" fill="none"/>
<polygon points="442.30,117.00 434.10,112.90 434.10,121.10" fill="#4472c4"/>
<path d="M421.00 137.00H436.30" stroke="#4472c4" stroke-width="1.0" fill="none"/>
<polygon points="442.30,137.00 434.10,132.90 434.10,141.10" fill="#4472c4"/>
<path d="M421.00 157.00H436.30" stroke="#4472c4" stroke-width="1.0" fill="none"/>
<polygon points="442.30,157.00 434.10,152.90 434.10,161.10" fill="#4472c4"/>
<path d="M421.00 177.00H436.30" stroke="#4472c4" stroke-width="1.0" fill="none"/>
<polygon points="442.30,177.00 434.10,172.90 434.10,181.10" fill="#4472c4"/>
<path d="M421.00 197.00H436.30" stroke="#4472c4" stroke-width="1.0" fill="none"/>
<polygon points="442.30,197.00 434.10,192.90 434.10,201.10" fill="#4472c4"/>
<path d="M421.00 217.00H436.30" stroke="#4472c4" stroke-width="1.0" fill="none"/>
<polygon points="442.30,217.00 434.10,212.90 434.10,221.10" fill="#4472c4"/>
<path d="M421.00 237.00H436.30" stroke="#4472c4" stroke-width="1.0" fill="none"/>
<polygon points="442.30,237.00 434.10,232.90 434.10,241.10" fill="#4472c4"/>
<path d="M421.00 257.00H436.30" stroke="#4472c4" stroke-width="1.0" fill="none"/>
<polygon points="442.30,257.00 434.10,252.90 434.10,261.10" fill="#4472c4"/>
<path d="M421.00 337.00H436.30" stroke="#4472c4" stroke-width="1.0" fill="none"/>
<polygon points="442.30,337.00 434.10,332.90 434.10,341.10" fill="#4472c4"/>
<path d="M421.00 357.00H436.30" stroke="#4472c4" stroke-width="1.0" fill="none"/>
<polygon points="442.30,357.00 434.10,352.90 434.10,361.10" fill="#4472c4"/>
<path d="M421.00 317.50H436.30" stroke="#4472c4" stroke-width="1.0" fill="none"/>
<polygon points="442.30,317.50 434.10,313.40 434.10,321.60" fill="#4472c4"/>
<path d="M421.00 277.50H436.30" stroke="#c00000" stroke-width="1.0" fill="none"/>
<polygon points="442.30,277.50 434.10,273.40 434.10,281.60" fill="#c00000"/>
<path d="M421.00 297.50H436.30" stroke="#c00000" stroke-width="1.0" fill="none"/>
<polygon points="442.30,297.50 434.10,293.40 434.10,301.60" fill="#c00000"/>
<path d="M482.50 830.00V383.30" stroke="#4472c4" stroke-width="1.0" fill="none"/>
<polygon points="482.50,377.30 478.40,385.50 486.60,385.50" fill="#4472c4"/>
<path d="M502.50 830.00V383.30" stroke="#4472c4" stroke-width="1.0" fill="none"/>
<polygon points="502.50,377.30 498.40,385.50 506.60,385.50" fill="#4472c4"/>
<path d="M522.50 830.00V383.30" stroke="#4472c4" stroke-width="1.0" fill="none"/>
<polygon points="522.50,377.30 518.40,385.50 526.60,385.50" fill="#4472c4"/>
<path d="M583.00 97.50H611.50M611.50 97.50Q622.50 97.50 622.50 86.50M622.50 86.50V50.00" stroke="#4472c4" stroke-width="1.0" fill="none"/>
<path d="M583.00 117.00H691.50M691.50 117.00Q702.50 117.00 702.50 128.00M702.50 128.00V446.00M702.50 446.00Q702.50 457.00 713.50 457.00M713.50 457.00H716.30" stroke="#4472c4" stroke-width="1.0" fill="none"/>
<polygon points="722.30,457.00 714.10,452.90 714.10,461.10" fill="#4472c4"/>
<path d="M583.00 137.50H671.50M671.50 137.50Q682.50 137.50 682.50 148.50M682.50 148.50V466.00M682.50 466.00Q682.50 477.00 693.50 477.00M693.50 477.00H716.30" stroke="#4472c4" stroke-width="1.0" fill="none"/>
<polygon points="722.30,477.00 714.10,472.90 714.10,481.10" fill="#4472c4"/>
<path d="M583.00 177.50H678.70M686.30 177.50H698.70M706.30 177.50H738.70M746.30 177.50H758.70M766.30 177.50H778.70M786.30 177.50H798.70M806.30 177.50H818.70M826.30 177.50H838.70M846.30 177.50H978.70M986.30 177.50H998.70M1006.30 177.50H1018.70M1026.30 177.50H1038.70M1046.30 177.50H1058.70M1066.30 177.50H1078.70M1086.30 177.50H1258.70M1266.30 177.50H1278.70M1286.30 177.50H1298.70M1306.30 177.50H1318.70M1326.30 177.50H1338.70M1346.30 177.50H1358.70M1366.30 177.50H1438.70M1446.30 177.50H1578.70M1586.30 177.50H1598.70M1606.30 177.50H1618.70M1626.30 177.50H1717.90M1725.50 177.50H1856.00" stroke="#c00000" stroke-width="1.0" fill="none"/>
<polygon points="1862.00,177.50 1853.80,173.40 1853.80,181.60" fill="#c00000"/>
<path d="M664.90 177.50V646.50M664.90 646.50Q664.90 657.50 675.90 657.50M675.90 657.50H778.70M786.30 657.50H798.70M806.30 657.50H818.70M826.30 657.50H898.70M906.30 657.50H956.30" stroke="#4472c4" stroke-width="1.0" fill="none"/>
<polygon points="962.30,657.50 954.10,653.40 954.10,661.60" fill="#4472c4"/>
<path d="M664.90 497.00H716.30" stroke="#4472c4" stroke-width="1.0" fill="none"/>
<polygon points="722.30,497.00 714.10,492.90 714.10,501.10" fill="#4472c4"/>
<path d="M583.00 197.00H631.50M631.50 197.00Q642.50 197.00 642.50 208.00M642.50 208.00V666.50M642.50 666.50Q642.50 677.50 653.50 677.50M653.50 677.50H778.70M786.30 677.50H798.70M806.30 677.50H818.70M826.30 677.50H898.70M906.30 677.50H956.30" stroke="#4472c4" stroke-width="1.0" fill="none"/>
<polygon points="962.30,677.50 954.10,673.40 954.10,681.60" fill="#4472c4"/>
<path d="M642.50 517.00H661.10M668.70 517.00H716.30" stroke="#4472c4" stroke-width="1.0" fill="none"/>
<polygon points="722.30,517.00 714.10,512.90 714.10,521.10" fill="#4472c4"/>
<path d="M583.00 217.00H611.50M611.50 217.00Q622.50 217.00 622.50 228.00M622.50 228.00V686.50M622.50 686.50Q622.50 697.50 633.50 697.50M633.50 697.50H778.70M786.30 697.50H798.70M806.30 697.50H818.70M826.30 697.50H898.70M906.30 697.50H956.30" stroke="#4472c4" stroke-width="1.0" fill="none"/>
<polygon points="962.30,697.50 954.10,693.40 954.10,701.60" fill="#4472c4"/>
<path d="M622.50 537.00H638.70M646.30 537.00H661.10M668.70 537.00H716.30" stroke="#4472c4" stroke-width="1.0" fill="none"/>
<polygon points="722.30,537.00 714.10,532.90 714.10,541.10" fill="#4472c4"/>
<path d="M583.00 237.50H591.50M591.50 237.50Q602.50 237.50 602.50 248.50M602.50 248.50V706.50M602.50 706.50Q602.50 717.50 613.50 717.50M613.50 717.50H778.70M786.30 717.50H798.70M806.30 717.50H818.70M826.30 717.50H898.70M906.30 717.50H956.30" stroke="#4472c4" stroke-width="1.0" fill="none"/>
<polygon points="962.30,717.50 954.10,713.40 954.10,721.60" fill="#4472c4"/>
<path d="M602.50 557.00H618.70M626.30 557.00H638.70M646.30 557.00H661.10M668.70 557.00H716.30" stroke="#4472c4" stroke-width="1.0" fill="none"/>
<polygon points="722.30,557.00 714.10,552.90 714.10,561.10" fill="#4472c4"/>
<path d="M583.00 277.00H598.70M606.30 277.00H618.70M626.30 277.00H638.70M646.30 277.00H661.10M668.70 277.00H678.70M686.30 277.00H698.70M706.30 277.00H738.70M746.30 277.00H758.70M766.30 277.00H778.70M786.30 277.00H798.70M806.30 277.00H818.70M826.30 277.00H838.70M846.30 277.00H931.50M931.50 277.00Q942.50 277.00 942.50 288.00M942.50 288.00V606.00M942.50 606.00Q942.50 617.00 953.50 617.00M953.50 617.00H956.30" stroke="#4472c4" stroke-width="1.0" fill="none"/>
<polygon points="962.30,617.00 954.10,612.90 954.10,621.10" fill="#4472c4"/>
<path d="M583.00 297.00H598.70M606.30 297.00H618.70M626.30 297.00H638.70M646.30 297.00H661.10M668.70 297.00H678.70M686.30 297.00H698.70M706.30 297.00H738.70M746.30 297.00H758.70M766.30 297.00H778.70M786.30 297.00H798.70M806.30 297.00H818.70M826.30 297.00H838.70M846.30 297.00H911.50M911.50 297.00Q922.50 297.00 922.50 308.00M922.50 308.00V626.00M922.50 626.00Q922.50 637.00 933.50 637.00M933.50 637.00H956.30" stroke="#4472c4" stroke-width="1.0" fill="none"/>
<polygon points="962.30,637.00 954.10,632.90 954.10,641.10" fill="#4472c4"/>
<path d="M583.00 317.00H598.70M606.30 317.00H618.70M626.30 317.00H638.70M646.30 317.00H661.10M668.70 317.00H678.70M686.30 317.00H698.70M706.30 317.00H738.70M746.30 317.00H758.70M766.30 317.00H778.70M786.30 317.00H798.70M806.30 317.00H818.70M826.30 317.00H838.70M846.30 317.00H918.70M926.30 317.00H938.70M946.30 317.00H978.70M986.30 317.00H998.70M1006.30 317.00H1018.70M1026.30 317.00H1038.70M1046.30 317.00H1058.70M1066.30 317.00H1078.70M1086.30 317.00H1258.70M1266.30 317.00H1278.70M1286.30 317.00H1298.70M1306.30 317.00H1318.70M1326.30 317.00H1338.70M1346.30 317.00H1358.70M1366.30 317.00H1442.50" stroke="#4472c4" stroke-width="1.0" fill="none"/>
<path d="M742.50 50.00V430.80" stroke="#4472c4" stroke-width="1.0" fill="none"/>
<polygon points="742.50,436.80 738.40,428.60 746.60,428.60" fill="#4472c4"/>
<path d="M762.50 50.00V430.80" stroke="#4472c4" stroke-width="1.0" fill="none"/>
<polygon points="762.50,436.80 758.40,428.60 766.60,428.60" fill="#4472c4"/>
<path d="M782.50 50.00V430.80" stroke="#4472c4" stroke-width="1.0" fill="none"/>
<polygon points="782.50,436.80 778.40,428.60 786.60,428.60" fill="#4472c4"/>
<path d="M802.50 50.00V430.80" stroke="#4472c4" stroke-width="1.0" fill="none"/>
<polygon points="802.50,436.80 798.40,428.60 806.60,428.60" fill="#4472c4"/>
<path d="M822.50 50.00V430.80" stroke="#4472c4" stroke-width="1.0" fill="none"/>
<polygon points="822.50,436.80 818.40,428.60 826.60,428.60" fill="#4472c4"/>
<path d="M842.50 50.00V430.80" stroke="#4472c4" stroke-width="1.0" fill="none"/>
<polygon points="842.50,436.80 838.40,428.60 846.60,428.60" fill="#4472c4"/>
<path d="M862.50 380.50V430.80" stroke="#4472c4" stroke-width="1.0" fill="none"/>
<polygon points="862.50,436.80 858.40,428.60 866.60,428.60" fill="#4472c4"/>
<circle cx="862.50" cy="377.50" r="2.6" fill="#fff" stroke="#4472c4" stroke-width="1"/>
<path d="M421.00 417.00H478.70M486.30 417.00H498.70M506.30 417.00H518.70M526.30 417.00H598.70M606.30 417.00H618.70M626.30 417.00H638.70M646.30 417.00H661.10M668.70 417.00H678.70M686.30 417.00H698.70M706.30 417.00H738.70M746.30 417.00H758.70M766.30 417.00H778.70M786.30 417.00H798.70M806.30 417.00H818.70M826.30 417.00H838.70M846.30 417.00H858.70M866.30 417.00H891.50M891.50 417.00Q902.50 417.00 902.50 428.00M902.50 428.00V517.50" stroke="#4472c4" stroke-width="1.0" fill="none"/>
<path d="M421.00 577.00H478.70M486.30 577.00H498.70M506.30 577.00H518.70M526.30 577.00H598.70M606.30 577.00H618.70M626.30 577.00H638.70M646.30 577.00H661.10M668.70 577.00H716.30" stroke="#4472c4" stroke-width="1.0" fill="none"/>
<polygon points="722.30,577.00 714.10,572.90 714.10,581.10" fill="#4472c4"/>
<path d="M421.00 597.00H478.70M486.30 597.00H498.70M506.30 597.00H518.70M526.30 597.00H598.70M606.30 597.00H618.70M626.30 597.00H638.70M646.30 597.00H661.10M668.70 597.00H716.30" stroke="#4472c4" stroke-width="1.0" fill="none"/>
<polygon points="722.30,597.00 714.10,592.90 714.10,601.10" fill="#4472c4"/>
<path d="M421.00 617.50H478.70M486.30 617.50H498.70M506.30 617.50H518.70M526.30 617.50H598.70M606.30 617.50H618.70M626.30 617.50H638.70M646.30 617.50H661.10M668.70 617.50H716.30" stroke="#c00000" stroke-width="1.0" fill="none"/>
<polygon points="722.30,617.50 714.10,613.40 714.10,621.60" fill="#c00000"/>
<path d="M782.50 830.00V643.30" stroke="#4472c4" stroke-width="1.0" fill="none"/>
<polygon points="782.50,637.30 778.40,645.50 786.60,645.50" fill="#4472c4"/>
<path d="M802.50 830.00V643.30" stroke="#4472c4" stroke-width="1.0" fill="none"/>
<polygon points="802.50,637.30 798.40,645.50 806.60,645.50" fill="#4472c4"/>
<path d="M822.50 830.00V643.30" stroke="#4472c4" stroke-width="1.0" fill="none"/>
<polygon points="822.50,637.30 818.40,645.50 826.60,645.50" fill="#4472c4"/>
<path d="M883.00 517.50H918.70M926.30 517.50H938.70M946.30 517.50H978.70M986.30 517.50H998.70M1006.30 517.50H1018.70M1026.30 517.50H1038.70M1046.30 517.50H1058.70M1066.30 517.50H1078.70M1086.30 517.50H1258.70M1266.30 517.50H1278.70M1286.30 517.50H1298.70M1306.30 517.50H1318.70M1326.30 517.50H1338.70M1346.30 517.50H1358.70M1366.30 517.50H1438.70M1446.30 517.50H1578.70M1586.30 517.50H1598.70M1606.30 517.50H1618.70M1626.30 517.50H1717.90M1725.50 517.50H1856.00" stroke="#c00000" stroke-width="1.0" fill="none"/>
<polygon points="1862.00,517.50 1853.80,513.40 1853.80,521.60" fill="#c00000"/>
<path d="M883.00 537.00H918.70M926.30 537.00H938.70M946.30 537.00H978.70M986.30 537.00H998.70M1006.30 537.00H1018.70M1026.30 537.00H1038.70M1046.30 537.00H1058.70M1066.30 537.00H1078.70M1086.30 537.00H1258.70M1266.30 537.00H1278.70M1286.30 537.00H1298.70M1306.30 537.00H1318.70M1326.30 537.00H1338.70M1346.30 537.00H1358.70M1366.30 537.00H1442.50" stroke="#4472c4" stroke-width="1.0" fill="none"/>
<path d="M883.00 577.50H891.50M891.50 577.50Q902.50 577.50 902.50 588.50M902.50 588.50V830.00" stroke="#4472c4" stroke-width="1.0" fill="none"/>
<path d="M982.50 50.00V590.80" stroke="#4472c4" stroke-width="1.0" fill="none"/>
<polygon points="982.50,596.80 978.40,588.60 986.60,588.60" fill="#4472c4"/>
<path d="M1002.50 50.00V590.80" stroke="#4472c4" stroke-width="1.0" fill="none"/>
<polygon points="1002.50,596.80 998.40,588.60 1006.60,588.60" fill="#4472c4"/>
<path d="M1022.50 50.00V590.80" stroke="#4472c4" stroke-width="1.0" fill="none"/>
<polygon points="1022.50,596.80 1018.40,588.60 1026.60,588.60" fill="#4472c4"/>
<path d="M1042.50 50.00V590.80" stroke="#4472c4" stroke-width="1.0" fill="none"/>
<polygon points="1042.50,596.80 1038.40,588.60 1046.60,588.60" fill="#4472c4"/>
<path d="M1062.50 50.00V590.80" stroke="#4472c4" stroke-width="1.0" fill="none"/>
<polygon points="1062.50,596.80 1058.40,588.60 1066.60,588.60" fill="#4472c4"/>
<path d="M1082.50 50.00V590.80" stroke="#4472c4" stroke-width="1.0" fill="none"/>
<polygon points="1082.50,596.80 1078.40,588.60 1086.60,588.60" fill="#4472c4"/>
<path d="M443.00 737.00H472.00" stroke="#4472c4" stroke-width="1.0" fill="none"/>
<path d="M472.00 737.50H478.70M486.30 737.50H498.70M506.30 737.50H518.70M526.30 737.50H778.70M786.30 737.50H798.70M806.30 737.50H818.70M826.30 737.50H898.70M906.30 737.50H956.30" stroke="#4472c4" stroke-width="1.0" fill="none"/>
<polygon points="962.30,737.50 954.10,733.40 954.10,741.60" fill="#4472c4"/>
<path d="M443.00 777.00H472.00" stroke="#4472c4" stroke-width="1.0" fill="none"/>
<path d="M472.00 777.50H478.70M486.30 777.50H498.70M506.30 777.50H518.70M526.30 777.50H778.70M786.30 777.50H798.70M806.30 777.50H818.70M826.30 777.50H898.70M906.30 777.50H956.30" stroke="#4472c4" stroke-width="1.0" fill="none"/>
<polygon points="962.30,777.50 954.10,773.40 954.10,781.60" fill="#4472c4"/>
<path d="M605.40 797.00H632.00" stroke="#4472c4" stroke-width="1.0" fill="none"/>
<circle cx="602.40" cy="797.00" r="2.6" fill="#fff" stroke="#4472c4" stroke-width="1"/>
<path d="M632.00 797.50H778.70M786.30 797.50H798.70M806.30 797.50H818.70M826.30 797.50H898.70M906.30 797.50H956.30" stroke="#4472c4" stroke-width="1.0" fill="none"/>
<polygon points="962.30,797.50 954.10,793.40 954.10,801.60" fill="#4472c4"/>
<path d="M700.00 817.00H778.70M786.30 817.00H798.70M806.30 817.00H818.70M826.30 817.00H898.70M906.30 817.00H956.30" stroke="#4472c4" stroke-width="1.0" fill="none"/>
<polygon points="962.30,817.00 954.10,812.90 954.10,821.10" fill="#4472c4"/>
<path d="M1103.00 637.50H1132.00" stroke="#4472c4" stroke-width="1.0" fill="none"/>
<path d="M1132.00 637.00H1258.70M1266.30 637.00H1278.70M1286.30 637.00H1298.70M1306.30 637.00H1318.70M1326.30 637.00H1338.70M1346.30 637.00H1358.70M1366.30 637.00H1438.70M1446.30 637.00H1578.70M1586.30 637.00H1598.70M1606.30 637.00H1618.70M1626.30 637.00H1717.90M1725.50 637.00H1836.00" stroke="#4472c4" stroke-width="1.0" fill="none"/>
<polygon points="1842.00,637.00 1833.80,632.90 1833.80,641.10" fill="#fff" stroke="#4472c4" stroke-width="1"/>
<path d="M1103.00 677.50H1258.70M1266.30 677.50H1278.70M1286.30 677.50H1298.70M1306.30 677.50H1318.70M1326.30 677.50H1338.70M1346.30 677.50H1358.70M1366.30 677.50H1438.70M1446.30 677.50H1578.70M1586.30 677.50H1598.70M1606.30 677.50H1618.70M1626.30 677.50H1717.90M1725.50 677.50H1856.00" stroke="#c00000" stroke-width="1.0" fill="none"/>
<polygon points="1862.00,677.50 1853.80,673.40 1853.80,681.60" fill="#c00000"/>
<path d="M1103.00 717.50H1258.70M1266.30 717.50H1278.70M1286.30 717.50H1298.70M1306.30 717.50H1318.70M1326.30 717.50H1338.70M1346.30 717.50H1358.70M1366.30 717.50H1442.50" stroke="#4472c4" stroke-width="1.0" fill="none"/>
<path d="M1103.00 777.50H1132.00" stroke="#4472c4" stroke-width="1.0" fill="none"/>
<path d="M1132.00 777.00H1236.30" stroke="#4472c4" stroke-width="1.0" fill="none"/>
<polygon points="1242.30,777.00 1234.10,772.90 1234.10,781.10" fill="#4472c4"/>
<path d="M1103.00 797.50H1132.00" stroke="#4472c4" stroke-width="1.0" fill="none"/>
<path d="M1132.00 797.00H1236.30" stroke="#4472c4" stroke-width="1.0" fill="none"/>
<polygon points="1242.30,797.00 1234.10,792.90 1234.10,801.10" fill="#4472c4"/>
<path d="M1262.50 50.00V750.80" stroke="#4472c4" stroke-width="1.0" fill="none"/>
<polygon points="1262.50,756.80 1258.40,748.60 1266.60,748.60" fill="#4472c4"/>
<path d="M1282.50 50.00V750.80" stroke="#4472c4" stroke-width="1.0" fill="none"/>
<polygon points="1282.50,756.80 1278.40,748.60 1286.60,748.60" fill="#4472c4"/>
<path d="M1302.50 50.00V750.80" stroke="#4472c4" stroke-width="1.0" fill="none"/>
<polygon points="1302.50,756.80 1298.40,748.60 1306.60,748.60" fill="#4472c4"/>
<path d="M1322.50 50.00V750.80" stroke="#4472c4" stroke-width="1.0" fill="none"/>
<polygon points="1322.50,756.80 1318.40,748.60 1326.60,748.60" fill="#4472c4"/>
<path d="M1342.50 50.00V750.80" stroke="#4472c4" stroke-width="1.0" fill="none"/>
<polygon points="1342.50,756.80 1338.40,748.60 1346.60,748.60" fill="#4472c4"/>
<path d="M1362.50 50.00V750.80" stroke="#4472c4" stroke-width="1.0" fill="none"/>
<polygon points="1362.50,756.80 1358.40,748.60 1366.60,748.60" fill="#4472c4"/>
<path d="M1383.00 777.00H1431.50M1431.50 777.00Q1442.50 777.00 1442.50 766.00M1442.50 766.00V50.00" stroke="#4472c4" stroke-width="1.0" fill="none"/>
<path d="M1383.00 797.00H1411.50M1411.50 797.00Q1422.50 797.00 1422.50 808.00M1422.50 808.00V830.00" stroke="#4472c4" stroke-width="1.0" fill="none"/>
<path d="M1582.50 50.00V830.00" stroke="#4472c4" stroke-width="1.0" fill="none"/>
<path d="M1602.50 50.00V830.00" stroke="#4472c4" stroke-width="1.0" fill="none"/>
<path d="M1622.50 50.00V830.00" stroke="#4472c4" stroke-width="1.0" fill="none"/>
<path d="M1721.70 50.00V830.00" stroke="#4472c4" stroke-width="1.0" fill="none"/>
<circle cx="664.90" cy="177.50" r="2.6" fill="#4472c4"/>
<circle cx="664.90" cy="497.00" r="2.6" fill="#4472c4"/>
<circle cx="642.50" cy="517.00" r="2.6" fill="#4472c4"/>
<circle cx="622.50" cy="537.00" r="2.6" fill="#4472c4"/>
<circle cx="602.50" cy="557.00" r="2.6" fill="#4472c4"/>
<circle cx="902.50" cy="517.50" r="2.6" fill="#4472c4"/>
<circle cx="1442.50" cy="317.00" r="2.6" fill="#4472c4"/>
<circle cx="1442.50" cy="537.00" r="2.6" fill="#4472c4"/>
<circle cx="1442.50" cy="717.50" r="2.6" fill="#4472c4"/>
<rect x="442.5" y="77" width="140" height="300" fill="#e8eef9" stroke="none"/><path d="M442.5 76.5V377.5M582.5 76.5V377.5" stroke="#000" stroke-width="1"/><path d="M442 77H583M442 377H583" stroke="#1a1a1a" stroke-width="1"/><path d="M442.5 87L452.5 77" stroke="#222" stroke-width="1"/>
<text x="448.2" y="223" font-size="11" fill="#222" textLength="126.8" lengthAdjust="spacing">Планирование качества</text>
<text x="569.5" y="372.8" font-size="11" fill="#222" textLength="6.8" lengthAdjust="spacing">3</text>
<rect x="722.5" y="437" width="160" height="200" fill="#e8eef9" stroke="none"/><path d="M722.5 436.5V637.5M882.5 436.5V637.5" stroke="#000" stroke-width="1"/><path d="M722 437H883M722 637H883" stroke="#1a1a1a" stroke-width="1"/><path d="M722.5 447L732.5 437" stroke="#222" stroke-width="1"/>
<text x="737.1" y="527" font-size="11" fill="#222" textLength="129.9" lengthAdjust="spacing">Обеспечение качества и</text>
<text x="739.7" y="540.2" font-size="11" fill="#222" textLength="124.2" lengthAdjust="spacing">стандартизация знаний</text>
<text x="869.5" y="632.8" font-size="11" fill="#222" textLength="6.8" lengthAdjust="spacing">4</text>
<rect x="962.5" y="597" width="140" height="303" fill="#e8eef9" stroke="none"/><path d="M962.5 596.5V900.5M1102.5 596.5V900.5" stroke="#000" stroke-width="1"/><path d="M962 597H1103M962 900H1103" stroke="#1a1a1a" stroke-width="1"/><path d="M962.5 607L972.5 597" stroke="#222" stroke-width="1"/>
<text x="982.5" y="793.9" font-size="11" fill="#222" textLength="98.6" lengthAdjust="spacing">Контроль качества</text>
<rect x="1242.5" y="757" width="140" height="143" fill="#e8eef9" stroke="none"/><path d="M1242.5 756.5V900.5M1382.5 756.5V900.5" stroke="#000" stroke-width="1"/><path d="M1242 757H1383M1242 900H1383" stroke="#1a1a1a" stroke-width="1"/><path d="M1242.5 767L1252.5 757" stroke="#222" stroke-width="1"/>
<text x="1280.8" y="776.5" font-size="11" fill="#222" textLength="62.1" lengthAdjust="spacing">Устранение</text>
<text x="1270.2" y="789.7" font-size="11" fill="#222" textLength="83.4" lengthAdjust="spacing">несоответствий</text>
<text x="1369.5" y="812.7" font-size="11" fill="#222" textLength="6.8" lengthAdjust="spacing">6</text>
<rect x="422.5" y="727" width="20" height="20" fill="#e8eef9"/><path d="M422.5 726.5v21M442.5 726.5v21" stroke="#000"/><path d="M422 727h21M422 747h21" stroke="#1a1a1a"/>
<rect x="422.5" y="767" width="20" height="20" fill="#e8eef9"/><path d="M422.5 766.5v21M442.5 766.5v21" stroke="#000"/><path d="M422 767h21M422 787h21" stroke="#1a1a1a"/>
<rect x="626.3" y="99.0" width="134.80000000000007" height="13.099999999999994" fill="#fff"/>
<text x="627.8" y="108.8" font-size="11" fill="#222" textLength="131.8" lengthAdjust="spacing">Цели в области качества</text>
<rect x="623.6" y="120.7" width="134.69999999999993" height="13.100000000000009" fill="#fff"/>
<text x="625.1" y="130.5" font-size="11" fill="#222" textLength="131.7" lengthAdjust="spacing">Руководство по качеству</text>
<rect x="587.5" y="181.39999999999998" width="369.0" height="13.100000000000023" fill="#fff"/>
<text x="589.0" y="191.2" font-size="11" fill="#222" textLength="366.0" lengthAdjust="spacing">Требования к инфраструктуре и среде функционирования процессов</text>
<rect x="593" y="199.39999999999998" width="281.9" height="13.100000000000023" fill="#fff"/>
<text x="594.5" y="209.2" font-size="11" fill="#222" textLength="278.9" lengthAdjust="spacing">Требования к компетенциям и мотивации персонала</text>
<rect x="598.6" y="222.1" width="306.9" height="13.100000000000023" fill="#fff"/>
<text x="600.1" y="231.9" font-size="11" fill="#222" textLength="303.9" lengthAdjust="spacing">Требования к документированию и обмену информацией</text>
<rect x="716.2" y="259.9" width="149.39999999999998" height="13.100000000000023" fill="#fff"/>
<text x="717.7" y="269.7" font-size="11" fill="#222" textLength="146.4" lengthAdjust="spacing">Планы качества и контроля</text>
<rect x="714" y="279.9" width="296.29999999999995" height="13.100000000000023" fill="#fff"/>
<text x="715.5" y="289.7" font-size="11" fill="#222" textLength="293.3" lengthAdjust="spacing">Критерии оценки и показатели функционирования СМК</text>
<rect x="874.4" y="363.2" width="115.20000000000005" height="26.80000000000001" fill="#fff"/>
<text x="878.1" y="373" font-size="11" fill="#222" textLength="107.6" lengthAdjust="spacing">ГОСТы по системам</text>
<text x="875.9" y="386.7" font-size="11" fill="#222" textLength="112.2" lengthAdjust="spacing">менеджмента знаний</text>
<rect x="1591.7" y="143.89999999999998" width="249.20000000000005" height="26.600000000000023" fill="#fff"/>
<text x="1593.2" y="153.7" font-size="11" fill="#222" textLength="246.2" lengthAdjust="spacing">Требования и критерии соответствия качества</text>
<text x="1601.3" y="167.2" font-size="11" fill="#222" textLength="230.5" lengthAdjust="spacing">(плановые значения показателей качества)</text>
<rect x="1588.7" y="500.7" width="242.29999999999995" height="13.099999999999966" fill="#fff"/>
<text x="1590.2" y="510.5" font-size="11" fill="#222" textLength="239.3" lengthAdjust="spacing">Стандарты организации (библиотека знаний)</text>
<rect x="1564.6" y="603.2" width="234.4000000000001" height="26.59999999999991" fill="#fff"/>
<text x="1632.4" y="613" font-size="11" fill="#222" textLength="98.8" lengthAdjust="spacing">Гарантии качества</text>
<text x="1566.1" y="626.5" font-size="11" fill="#222" textLength="231.4" lengthAdjust="spacing">(свидетельства соответствия требованиям)</text>
<rect x="1585" y="660.2" width="241.5999999999999" height="13.099999999999909" fill="#fff"/>
<text x="1586.5" y="670" font-size="11" fill="#222" textLength="238.6" lengthAdjust="spacing">План-факт отклонения показателей качества</text>
<rect x="564.9" y="720.6" width="131.80000000000007" height="13.099999999999909" fill="#fff"/>
<text x="566.4" y="730.4" font-size="11" fill="#222" textLength="128.8" lengthAdjust="spacing">Продукция поставщиков</text>
<rect x="550.7" y="760.7" width="186.79999999999995" height="13.099999999999909" fill="#fff"/>
<text x="552.2" y="770.5" font-size="11" fill="#222" textLength="183.8" lengthAdjust="spacing">Рекламации (жалобы и претензии)</text>
<rect x="619.8" y="780.0" width="244.30000000000007" height="13.099999999999909" fill="#fff"/>
<text x="621.3" y="789.8" font-size="11" fill="#222" textLength="241.3" lengthAdjust="spacing">Основная и побочная продукция организации</text>
<rect x="1148.8" y="743.4000000000001" width="86.20000000000005" height="26.59999999999991" fill="#fff"/>
<text x="1151.3" y="753.2" font-size="11" fill="#222" textLength="80.6" lengthAdjust="spacing">Свидетельства</text>
<text x="1150.3" y="766.7" font-size="11" fill="#222" textLength="83.2" lengthAdjust="spacing">несоответствий</text>
<rect x="1187.8" y="779.9000000000001" width="28.40000000000009" height="13.099999999999909" fill="#fff"/>
<text x="1189.3" y="789.7" font-size="11" fill="#222" textLength="25.4" lengthAdjust="spacing">Брак</text>
<text x="444.2" y="743.5" font-size="9.5" fill="#222" textLength="57.4" lengthAdjust="spacing">Поставщики</text>
<text x="444.2" y="755.4" font-size="9.5" fill="#222" textLength="48.9" lengthAdjust="spacing">продукции</text>
<text x="444.2" y="783.5" font-size="9.5" fill="#222" textLength="61.4" lengthAdjust="spacing">Потребители</text>
<text x="444.2" y="795.4" font-size="9.5" fill="#222" textLength="48.9" lengthAdjust="spacing">продукции</text>
<path d="M928 277H932.5Q942.5 277 942.5 287V310M982.5 360V392" stroke="#4472c4" fill="none"/>
</svg></div>
<div class="a" style="left:420px;top:56px;width:1472px;height:1px;background:repeating-linear-gradient(to right,#222 0 1px,#fff 1px 2px)"></div>
<div class="a" style="left:420px;top:56px;width:1px;height:770px;background:repeating-linear-gradient(to bottom,#222 0 1px,#fff 1px 2px)"></div>
<div class="a" style="left:1884px;top:57px;width:8px;height:770px;background:#f0f0f0"></div>
<div class="a" style="left:1884px;top:383px;width:8px;height:122px;background:#c9c9c9"></div>
<div class="a" style="left:421px;top:816px;width:1471px;height:8px;background:#f0f0f0"></div>
<div class="a" style="left:1064px;top:817px;width:331px;height:8px;background:#c9c9c9"></div>
</body></html>
